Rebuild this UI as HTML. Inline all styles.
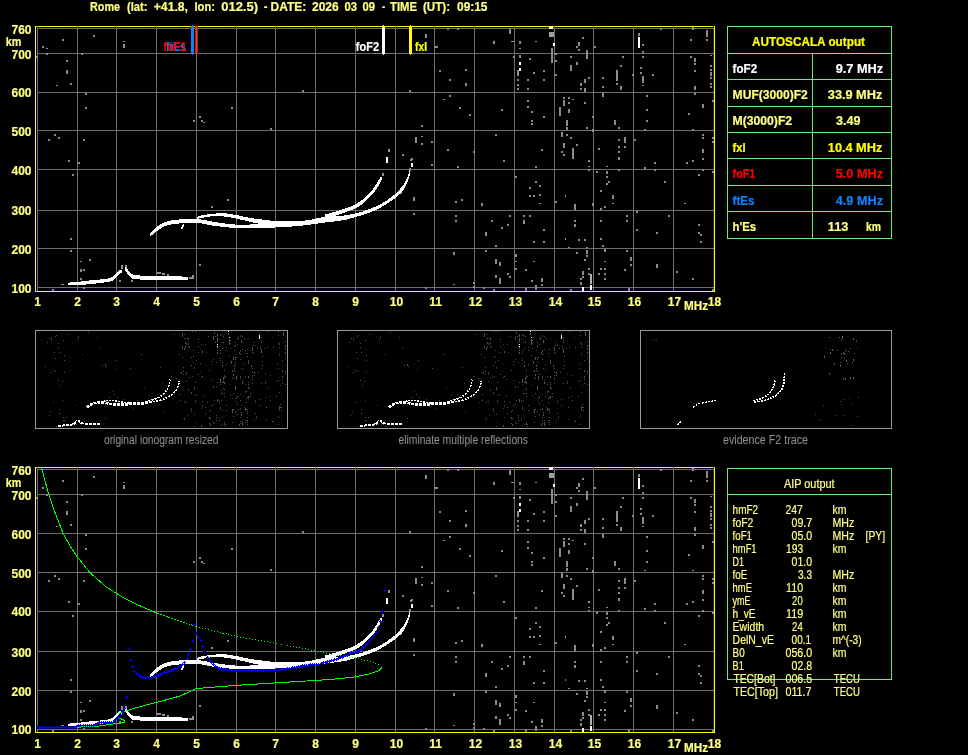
<!DOCTYPE html>
<html lang="en"><head><meta charset="utf-8"><title>AUTOSCALA ionogram - Rome</title>
<style>html,body{margin:0;padding:0;background:#000;}body{width:968px;height:755px;overflow:hidden;}svg{display:block;font-family:"Liberation Sans", sans-serif;will-change:transform;}</style>
</head><body>
<svg width="968" height="755" viewBox="0 0 968 755">
<rect width="968" height="755" fill="#000"/>
<text y="11" fill="#ffff80" stroke="#ffff80" stroke-width="0.2" font-size="12" font-weight="bold"><tspan x="90" textLength="30.00" lengthAdjust="spacingAndGlyphs">Rome</tspan> <tspan x="127" textLength="20.50" lengthAdjust="spacingAndGlyphs">(lat:</tspan> <tspan x="153.75" textLength="34.25" lengthAdjust="spacingAndGlyphs">+41.8,</tspan> <tspan x="194.5" textLength="20.50" lengthAdjust="spacingAndGlyphs">lon:</tspan> <tspan x="221.25" textLength="36.75" lengthAdjust="spacingAndGlyphs">012.5)</tspan> <tspan x="263.75" textLength="3.75" lengthAdjust="spacingAndGlyphs">-</tspan> <tspan x="270.5" textLength="35.75" lengthAdjust="spacingAndGlyphs">DATE:</tspan> <tspan x="312" textLength="26.75" lengthAdjust="spacingAndGlyphs">2026</tspan> <tspan x="344.5" textLength="12.50" lengthAdjust="spacingAndGlyphs">03</tspan> <tspan x="362.5" textLength="12.50" lengthAdjust="spacingAndGlyphs">09</tspan> <tspan x="382" textLength="3.20" lengthAdjust="spacingAndGlyphs">-</tspan> <tspan x="390" textLength="27.00" lengthAdjust="spacingAndGlyphs">TIME</tspan> <tspan x="423" textLength="27.00" lengthAdjust="spacingAndGlyphs">(UT):</tspan> <tspan x="457" textLength="30.50" lengthAdjust="spacingAndGlyphs">09:15</tspan></text>
<g shape-rendering="crispEdges">
<path d="M35 26h680v266h-680zM36 27v264h678v-264z" fill="#ffff00" fill-rule="evenodd"/>
<rect x="37" y="26" width="1" height="265" fill="#6e6e6e"/>
<rect x="77" y="26" width="1" height="265" fill="#6e6e6e"/>
<rect x="116" y="26" width="1" height="265" fill="#6e6e6e"/>
<rect x="156" y="26" width="1" height="265" fill="#6e6e6e"/>
<rect x="196" y="26" width="1" height="265" fill="#6e6e6e"/>
<rect x="236" y="26" width="1" height="265" fill="#6e6e6e"/>
<rect x="275" y="26" width="1" height="265" fill="#6e6e6e"/>
<rect x="315" y="26" width="1" height="265" fill="#6e6e6e"/>
<rect x="355" y="26" width="1" height="265" fill="#6e6e6e"/>
<rect x="395" y="26" width="1" height="265" fill="#6e6e6e"/>
<rect x="434" y="26" width="1" height="265" fill="#6e6e6e"/>
<rect x="474" y="26" width="1" height="265" fill="#6e6e6e"/>
<rect x="514" y="26" width="1" height="265" fill="#6e6e6e"/>
<rect x="554" y="26" width="1" height="265" fill="#6e6e6e"/>
<rect x="593" y="26" width="1" height="265" fill="#6e6e6e"/>
<rect x="633" y="26" width="1" height="265" fill="#6e6e6e"/>
<rect x="673" y="26" width="1" height="265" fill="#6e6e6e"/>
<rect x="713" y="26" width="1" height="265" fill="#2a2a3a"/>
<rect x="37" y="287" width="677" height="1" fill="#6e6e6e"/>
<rect x="37" y="248" width="677" height="1" fill="#6e6e6e"/>
<rect x="37" y="210" width="677" height="1" fill="#6e6e6e"/>
<rect x="37" y="169" width="677" height="1" fill="#6e6e6e"/>
<rect x="37" y="130" width="677" height="1" fill="#6e6e6e"/>
<rect x="37" y="92" width="677" height="1" fill="#6e6e6e"/>
<rect x="37" y="53" width="677" height="1" fill="#6e6e6e"/>
<rect x="37" y="28" width="677" height="1" fill="#6e6e6e"/>
<path fill="#8c8c8c" d="M62 39h2v2h-2zM93 35h2v2h-2zM42 46h2v2h-2zM46 48h2v1h-2zM123 41h2v1h-2zM123 44h2v4h-2zM46 53h2v2h-2zM81 53h2v2h-2zM36 56h2v2h-2zM66 60h2v2h-2zM66 70h2v4h-2zM70 83h2v2h-2zM56 85h2v1h-2zM85 93h2v2h-2zM85 107h2v2h-2zM231 107h2v2h-2zM199 116h2v2h-2zM193 120h2v2h-2zM201 120h2v2h-2zM203 122h2v1h-2zM54 134h2v2h-2zM58 137h2v2h-2zM48 139h2v2h-2zM83 139h2v2h-2zM68 160h2v2h-2zM78 162h2v2h-2zM72 174h2v2h-2zM227 199h2v2h-2zM211 206h2v2h-2zM70 238h2v2h-2zM70 250h2v2h-2zM89 259h2v2h-2zM80 261h2v1h-2zM80 269h2v3h-2zM83 269h2v2h-2zM80 278h2v2h-2zM199 264h2v2h-2zM119 280h2v2h-2zM131 280h2v2h-2zM52 289h2v2h-2zM83 287h2v2h-2zM61 284h3v1h-3zM302 90h2v2h-2zM409 90h2v2h-2zM270 128h2v2h-2zM421 125h2v2h-2zM425 34h2v4h-2zM434 46h2v2h-2zM415 137h2v6h-2zM421 136h2v1h-2zM421 143h2v2h-2zM431 141h2v2h-2zM388 149h2v2h-2zM402 154h2v2h-2zM411 158h2v2h-2zM431 164h2v2h-2zM413 197h2v4h-2zM413 213h2v2h-2zM425 287h2v2h-2zM447 28h2v2h-2zM457 28h2v2h-2zM509 29h2v5h-2zM436 46h2v2h-2zM493 41h2v3h-2zM511 41h3v1h-3zM519 41h2v3h-2zM519 48h2v1h-2zM535 41h2v1h-2zM551 48h2v15h-2zM555 53h2v2h-2zM555 60h2v2h-2zM555 74h2v2h-2zM582 37h2v2h-2zM578 42h2v4h-2zM576 46h2v2h-2zM578 49h2v2h-2zM594 46h2v2h-2zM586 50h2v9h-2zM570 56h2v2h-2zM576 62h2v3h-2zM570 65h2v6h-2zM622 56h2v2h-2zM620 65h2v2h-2zM616 70h2v11h-2zM616 83h2v2h-2zM620 86h2v4h-2zM632 74h2v2h-2zM588 77h2v2h-2zM584 79h2v4h-2zM580 83h2v3h-2zM580 88h2v2h-2zM584 88h2v4h-2zM602 77h2v2h-2zM602 86h2v2h-2zM602 93h2v4h-2zM513 56h2v2h-2zM519 55h2v3h-2zM529 58h2v2h-2zM517 70h2v6h-2zM517 79h2v2h-2zM517 84h2v2h-2zM517 88h2v2h-2zM527 79h2v2h-2zM527 88h2v2h-2zM533 72h2v2h-2zM543 70h2v2h-2zM543 79h2v2h-2zM439 70h2v2h-2zM465 69h2v2h-2zM449 79h2v2h-2zM465 83h2v3h-2zM449 95h2v2h-2zM443 99h2v1h-2zM459 107h2v2h-2zM469 114h2v2h-2zM501 109h2v2h-2zM495 134h2v2h-2zM527 100h2v2h-2zM527 106h2v2h-2zM531 111h2v2h-2zM543 116h2v2h-2zM531 120h2v2h-2zM531 123h2v2h-2zM563 97h2v2h-2zM568 97h2v2h-2zM572 99h2v1h-2zM563 100h2v6h-2zM568 102h2v2h-2zM559 107h2v9h-2zM568 109h2v4h-2zM584 102h2v2h-2zM566 120h2v6h-2zM566 127h2v3h-2zM586 127h2v2h-2zM592 116h2v2h-2zM592 129h2v3h-2zM614 120h2v5h-2zM618 127h2v2h-2zM561 132h2v5h-2zM566 134h2v2h-2zM570 137h2v2h-2zM563 143h2v5h-2zM576 144h2v2h-2zM572 148h2v2h-2zM618 139h2v2h-2zM624 137h2v6h-2zM618 146h2v2h-2zM624 146h2v2h-2zM634 139h2v2h-2zM598 148h2v2h-2zM447 149h2v2h-2zM541 149h2v2h-2zM473 151h2v2h-2zM561 151h2v2h-2zM563 154h2v2h-2zM572 150h2v9h-2zM618 151h2v2h-2zM618 157h2v3h-2zM503 160h2v2h-2zM588 160h2v2h-2zM588 166h2v1h-2zM588 169h2v2h-2zM606 166h2v1h-2zM618 169h2v2h-2zM457 166h2v2h-2zM535 166h2v2h-2zM596 171h2v2h-2zM606 171h2v3h-2zM606 176h2v2h-2zM608 181h2v2h-2zM606 183h2v2h-2zM515 176h2v2h-2zM535 181h2v2h-2zM539 185h2v2h-2zM529 187h2v2h-2zM529 195h2v2h-2zM533 195h2v2h-2zM539 194h2v2h-2zM539 203h2v1h-2zM600 190h2v2h-2zM612 195h2v4h-2zM612 203h2v1h-2zM565 195h1v2h-1zM555 201h2v2h-2zM574 204h2v6h-2zM592 203h2v3h-2zM604 206h2v2h-2zM600 208h2v2h-2zM455 201h2v2h-2zM461 199h2v2h-2zM481 203h2v3h-2zM455 215h2v2h-2zM455 220h2v2h-2zM491 220h2v2h-2zM509 215h2v2h-2zM507 224h2v2h-2zM501 227h2v2h-2zM485 232h2v4h-2zM495 245h2v2h-2zM523 215h2v2h-2zM529 215h2v2h-2zM523 220h2v4h-2zM543 229h2v2h-2zM533 241h2v2h-2zM543 241h2v2h-2zM574 220h2v2h-2zM574 224h2v3h-2zM565 238h1v2h-1zM578 239h2v2h-2zM584 239h2v2h-2zM568 247h2v1h-2zM600 220h2v2h-2zM626 215h2v2h-2zM626 220h2v2h-2zM600 238h2v2h-2zM602 245h2v2h-2zM604 249h2v3h-2zM626 250h2v2h-2zM453 252h2v3h-2zM485 250h2v2h-2zM495 259h2v5h-2zM499 262h2v4h-2zM515 254h2v3h-2zM515 261h2v1h-2zM515 268h2v2h-2zM533 261h2v1h-2zM525 269h2v2h-2zM507 273h2v2h-2zM509 276h2v2h-2zM495 275h2v3h-2zM499 278h2v6h-2zM531 280h2v2h-2zM541 278h2v4h-2zM541 284h2v2h-2zM473 282h2v2h-2zM473 286h2v2h-2zM453 284h2v1h-2zM483 287h2v2h-2zM493 289h2v2h-2zM525 288h2v3h-2zM535 285h2v5h-2zM576 252h2v2h-2zM586 247h2v1h-2zM586 250h2v4h-2zM586 255h2v2h-2zM584 259h2v2h-2zM588 268h2v2h-2zM582 271h2v4h-2zM588 273h2v2h-2zM580 278h2v2h-2zM580 282h2v3h-2zM582 276h2v2h-2zM570 289h2v2h-2zM604 261h2v1h-2zM600 268h2v2h-2zM604 268h2v2h-2zM598 273h2v2h-2zM604 273h2v2h-2zM604 278h2v2h-2zM624 269h2v2h-2zM630 257h2v4h-2zM630 264h2v2h-2zM628 288h2v3h-2zM638 33h2v3h-2zM642 44h2v2h-2zM642 51h2v2h-2zM642 56h2v2h-2zM640 67h2v2h-2zM640 72h2v2h-2zM642 76h2v7h-2zM642 85h2v1h-2zM652 74h2v2h-2zM660 28h2v2h-2zM692 27h2v3h-2zM690 39h2v2h-2zM706 30h2v7h-2zM706 39h2v2h-2zM690 56h2v2h-2zM694 58h2v4h-2zM694 63h2v2h-2zM694 70h2v2h-2zM694 86h2v4h-2zM694 93h2v2h-2zM710 55h2v1h-2zM710 65h2v2h-2zM710 69h2v2h-2zM710 72h2v4h-2zM710 77h2v2h-2zM710 83h2v2h-2zM710 86h2v2h-2zM712 100h2v2h-2zM702 104h2v4h-2zM688 113h2v2h-2zM646 95h2v2h-2zM646 109h2v2h-2zM646 120h2v2h-2zM644 129h2v1h-2zM692 129h2v1h-2zM702 134h2v2h-2zM702 137h2v2h-2zM712 137h2v2h-2zM712 141h2v2h-2zM702 149h2v2h-2zM634 139h2v2h-2zM616 83h2v2h-2zM620 87h2v2h-2zM618 146h2v2h-2zM624 146h2v2h-2zM654 162h2v2h-2zM644 167h2v2h-2zM654 169h2v2h-2zM664 181h2v2h-2zM686 162h2v2h-2zM692 160h2v2h-2zM702 158h2v2h-2zM702 151h2v2h-2zM702 169h2v2h-2zM698 174h2v2h-2zM712 171h2v2h-2zM684 203h2v1h-2zM636 211h2v2h-2zM636 229h2v2h-2zM668 215h2v2h-2zM656 232h2v2h-2zM698 224h2v2h-2zM698 232h2v2h-2zM700 234h2v2h-2zM700 241h2v2h-2zM656 264h2v4h-2zM676 271h2v2h-2zM692 278h2v2h-2zM712 289h2v2h-2z"/>
<path fill="#fff" d="M549 26h4v3h-4zM553 43h2v3h-2zM519 62h2v3h-2zM519 68h2v3h-2zM582 287h2v4h-2zM590 285h2v5h-2zM638 37h2v11h-2z"/>
<path fill="#a0a0a0" d="M549 32h5v5h-5z"/>
<path fill="#b0b0b0" d="M590 274h2v10h-2z"/>
<path fill="#909090" d="M382 173h2v3h-2zM388 150h2v2h-2zM121 265h2v4h-2zM125 265h2v3h-2zM189 277h5v2h-5zM192 275h2v2h-2zM157 272h4v2h-4zM162 273h3v2h-3zM167 274h2v2h-2zM409 168h2v3h-2zM410 159h2v2h-2z"/>
<polygon points="68.0,282.6 74.0,282.3 80.0,281.6 91.0,280.3 100.0,279.5 108.0,278.5 112.8,277.0 115.0,274.5 117.0,272.0 119.0,270.5 121.5,270.0 121.5,272.5 119.0,274.0 117.0,276.0 115.0,279.0 112.8,281.0 108.0,282.0 100.0,283.0 91.0,284.0 80.0,285.2 74.0,285.2 68.0,285.0" fill="#fff"/>
<polygon points="125.0,267.0 126.5,268.0 128.0,270.0 130.0,272.5 132.6,274.5 140.0,275.5 160.0,276.0 182.0,276.5 188.0,277.0 188.0,280.0 182.0,280.0 160.0,280.0 140.0,279.5 132.6,279.0 130.0,277.0 128.0,274.5 126.5,272.0 125.0,270.0" fill="#fff"/>
<polygon points="150.0,233.0 153.0,230.0 156.5,227.0 160.0,224.5 164.8,222.0 173.0,220.0 185.0,219.0 196.2,218.8 205.0,220.0 214.4,222.0 225.0,223.5 236.0,224.6 250.0,224.5 262.0,224.0 270.0,220.5 292.0,220.6 300.0,220.6 311.0,220.4 313.0,219.2 325.0,216.5 338.0,215.8 338.0,221.0 325.0,222.5 313.0,224.2 311.0,224.6 300.0,225.8 292.0,226.5 270.0,227.8 262.0,228.3 250.0,228.5 236.0,228.3 225.0,227.0 214.4,226.0 205.0,224.0 196.2,222.5 185.0,223.0 173.0,224.0 164.8,226.0 160.0,229.0 156.5,231.5 153.0,234.5 150.0,236.0" fill="#fff"/>
<polygon points="197.0,217.0 202.0,215.3 210.0,214.0 217.7,213.4 226.0,213.4 236.6,215.0 248.9,217.8 262.0,219.5 270.0,220.3 270.0,225.0 262.0,224.5 248.9,221.5 236.6,218.6 226.0,216.6 217.7,216.2 210.0,216.5 202.0,217.8 197.0,219.0" fill="#fff"/>
<polygon points="325.0,214.5 338.0,210.9 346.0,208.3 354.4,205.0 360.0,201.5 366.0,196.8 370.0,192.5 374.2,187.5 377.0,183.0 379.2,179.0 381.0,176.5 381.8,176.5 381.8,179.0 381.0,181.0 379.2,184.5 377.0,188.0 374.2,192.0 370.0,196.8 366.0,201.0 360.0,205.8 354.4,208.8 346.0,212.0 338.0,214.8 325.0,219.0" fill="#fff"/>
<polygon points="338.0,216.2 346.0,215.2 354.4,213.6 362.0,211.7 370.9,208.6 377.0,206.0 382.5,203.0 388.0,199.6 394.0,195.0 398.0,191.3 401.5,187.4 403.8,184.5 405.6,181.0 407.0,178.0 408.3,175.0 409.5,171.5 410.4,169.5 410.4,173.0 409.5,176.5 408.3,180.0 407.0,183.5 405.6,186.0 403.8,189.5 401.5,192.7 398.0,195.6 394.0,199.0 388.0,203.2 382.5,206.5 377.0,209.6 370.9,212.0 362.0,215.3 354.4,217.3 346.0,219.8 338.0,221.0" fill="#fff"/>
<rect x="386" y="157" width="2" height="6" fill="#fff"/>
<rect x="411" y="163" width="2" height="4" fill="#fff"/>
<rect x="181" y="227" width="2" height="2" fill="#fff"/>
<rect x="182" y="225" width="2" height="2" fill="#fff"/>
<rect x="183" y="224" width="1" height="2" fill="#fff"/>
</g>
<g shape-rendering="crispEdges">
<rect x="191" y="26" width="3" height="28" fill="#0a84ff"/><rect x="192" y="25" width="1" height="30" fill="#0a84ff"/>
<rect x="195" y="26" width="1" height="28" fill="#ff0000"/><rect x="197" y="26" width="1" height="28" fill="#ff0000"/><rect x="196" y="25" width="1" height="2" fill="#ff0000"/>
<rect x="382" y="26" width="3" height="28" fill="#fff"/><rect x="383" y="25" width="1" height="30" fill="#fff"/>
<rect x="409" y="26" width="3" height="28" fill="#ffff00"/><rect x="410" y="25" width="1" height="30" fill="#ffff00"/>
</g>
<text x="166" y="51" fill="#0a84ff" stroke="#0a84ff" stroke-width="0.2" font-size="12" font-weight="bold" textLength="20" lengthAdjust="spacingAndGlyphs">ftEs</text>
<text x="163.6" y="51" fill="#ff0000" stroke="#ff0000" stroke-width="0.2" font-size="12" font-weight="bold" textLength="22.8" lengthAdjust="spacingAndGlyphs">foF1</text>
<text x="355.8" y="51" fill="#fff" stroke="#fff" stroke-width="0.2" font-size="12" font-weight="bold" textLength="23.2" lengthAdjust="spacingAndGlyphs">foF2</text>
<text x="415" y="51" fill="#ffff00" stroke="#ffff00" stroke-width="0.2" font-size="12" font-weight="bold" textLength="12" lengthAdjust="spacingAndGlyphs">fxI</text>
<text x="31.5" y="34" fill="#ffff80" stroke="#ffff80" stroke-width="0.2" font-size="12" font-weight="bold" text-anchor="end">760</text>
<text x="5.8" y="46.3" fill="#ffff80" stroke="#ffff80" stroke-width="0.2" font-size="12" font-weight="bold" textLength="15.6" lengthAdjust="spacingAndGlyphs">km</text>
<text x="31.5" y="59" fill="#ffff80" stroke="#ffff80" stroke-width="0.2" font-size="12" font-weight="bold" text-anchor="end">700</text>
<text x="31.5" y="97" fill="#ffff80" stroke="#ffff80" stroke-width="0.2" font-size="12" font-weight="bold" text-anchor="end">600</text>
<text x="31.5" y="136" fill="#ffff80" stroke="#ffff80" stroke-width="0.2" font-size="12" font-weight="bold" text-anchor="end">500</text>
<text x="31.5" y="175" fill="#ffff80" stroke="#ffff80" stroke-width="0.2" font-size="12" font-weight="bold" text-anchor="end">400</text>
<text x="31.5" y="215" fill="#ffff80" stroke="#ffff80" stroke-width="0.2" font-size="12" font-weight="bold" text-anchor="end">300</text>
<text x="31.5" y="254" fill="#ffff80" stroke="#ffff80" stroke-width="0.2" font-size="12" font-weight="bold" text-anchor="end">200</text>
<text x="31.5" y="293" fill="#ffff80" stroke="#ffff80" stroke-width="0.2" font-size="12" font-weight="bold" text-anchor="end">100</text>
<text x="37.6" y="306" fill="#ffff80" stroke="#ffff80" stroke-width="0.2" font-size="12" font-weight="bold" text-anchor="middle">1</text>
<text x="77.6" y="306" fill="#ffff80" stroke="#ffff80" stroke-width="0.2" font-size="12" font-weight="bold" text-anchor="middle">2</text>
<text x="116.6" y="306" fill="#ffff80" stroke="#ffff80" stroke-width="0.2" font-size="12" font-weight="bold" text-anchor="middle">3</text>
<text x="156.6" y="306" fill="#ffff80" stroke="#ffff80" stroke-width="0.2" font-size="12" font-weight="bold" text-anchor="middle">4</text>
<text x="196.6" y="306" fill="#ffff80" stroke="#ffff80" stroke-width="0.2" font-size="12" font-weight="bold" text-anchor="middle">5</text>
<text x="236.6" y="306" fill="#ffff80" stroke="#ffff80" stroke-width="0.2" font-size="12" font-weight="bold" text-anchor="middle">6</text>
<text x="275.6" y="306" fill="#ffff80" stroke="#ffff80" stroke-width="0.2" font-size="12" font-weight="bold" text-anchor="middle">7</text>
<text x="315.6" y="306" fill="#ffff80" stroke="#ffff80" stroke-width="0.2" font-size="12" font-weight="bold" text-anchor="middle">8</text>
<text x="355.6" y="306" fill="#ffff80" stroke="#ffff80" stroke-width="0.2" font-size="12" font-weight="bold" text-anchor="middle">9</text>
<text x="396.5" y="306" fill="#ffff80" stroke="#ffff80" stroke-width="0.2" font-size="12" font-weight="bold" text-anchor="middle">10</text>
<text x="435.5" y="306" fill="#ffff80" stroke="#ffff80" stroke-width="0.2" font-size="12" font-weight="bold" text-anchor="middle">11</text>
<text x="475.5" y="306" fill="#ffff80" stroke="#ffff80" stroke-width="0.2" font-size="12" font-weight="bold" text-anchor="middle">12</text>
<text x="515.5" y="306" fill="#ffff80" stroke="#ffff80" stroke-width="0.2" font-size="12" font-weight="bold" text-anchor="middle">13</text>
<text x="555.5" y="306" fill="#ffff80" stroke="#ffff80" stroke-width="0.2" font-size="12" font-weight="bold" text-anchor="middle">14</text>
<text x="594.5" y="306" fill="#ffff80" stroke="#ffff80" stroke-width="0.2" font-size="12" font-weight="bold" text-anchor="middle">15</text>
<text x="634.5" y="306" fill="#ffff80" stroke="#ffff80" stroke-width="0.2" font-size="12" font-weight="bold" text-anchor="middle">16</text>
<text x="674.5" y="306" fill="#ffff80" stroke="#ffff80" stroke-width="0.2" font-size="12" font-weight="bold" text-anchor="middle">17</text>
<text x="714.5" y="306" fill="#ffff80" stroke="#ffff80" stroke-width="0.2" font-size="12" font-weight="bold" text-anchor="middle">18</text>
<text x="684" y="310" fill="#ffff80" stroke="#ffff80" stroke-width="0.2" font-size="12" font-weight="bold" textLength="24" lengthAdjust="spacingAndGlyphs">MHz</text>
<g shape-rendering="crispEdges">
<rect x="727" y="26" width="165" height="1" fill="#66ee77"/>
<rect x="727" y="53" width="165" height="1" fill="#66ee77"/>
<rect x="727" y="79" width="165" height="1" fill="#66ee77"/>
<rect x="727" y="106" width="165" height="1" fill="#66ee77"/>
<rect x="727" y="132" width="165" height="1" fill="#66ee77"/>
<rect x="727" y="158" width="165" height="1" fill="#66ee77"/>
<rect x="727" y="185" width="165" height="1" fill="#66ee77"/>
<rect x="727" y="211" width="165" height="1" fill="#66ee77"/>
<rect x="727" y="238" width="165" height="1" fill="#66ee77"/>
<rect x="727" y="26" width="1" height="213" fill="#66ee77"/>
<rect x="891" y="26" width="1" height="213" fill="#66ee77"/>
<rect x="812" y="53" width="1" height="185" fill="#66ee77"/>
</g>
<text x="752" y="46" fill="#ffff00" stroke="#ffff00" stroke-width="0.2" font-size="12" font-weight="bold" textLength="113" lengthAdjust="spacingAndGlyphs">AUTOSCALA output</text>
<text x="732.6" y="73" fill="#fff" stroke="#fff" stroke-width="0.2" font-size="12" font-weight="bold" textLength="24.5" lengthAdjust="spacingAndGlyphs">foF2</text>
<text x="835.7" y="73" fill="#fff" stroke="#fff" stroke-width="0.2" font-size="12" font-weight="bold" textLength="47.5" lengthAdjust="spacingAndGlyphs">9.7 MHz</text>
<text x="732.6" y="99" fill="#ffff80" stroke="#ffff80" stroke-width="0.2" font-size="12" font-weight="bold" textLength="75.2" lengthAdjust="spacingAndGlyphs">MUF(3000)F2</text>
<text x="827.8" y="99" fill="#ffff80" stroke="#ffff80" stroke-width="0.2" font-size="12" font-weight="bold" textLength="54.5" lengthAdjust="spacingAndGlyphs">33.9 MHz</text>
<text x="732.6" y="125" fill="#ffff80" stroke="#ffff80" stroke-width="0.2" font-size="12" font-weight="bold" textLength="59.5" lengthAdjust="spacingAndGlyphs">M(3000)F2</text>
<text x="836" y="125" fill="#ffff80" stroke="#ffff80" stroke-width="0.2" font-size="12" font-weight="bold" textLength="24.5" lengthAdjust="spacingAndGlyphs">3.49</text>
<text x="732.6" y="152" fill="#ffff00" stroke="#ffff00" stroke-width="0.2" font-size="12" font-weight="bold" textLength="13" lengthAdjust="spacingAndGlyphs">fxI</text>
<text x="827.8" y="152" fill="#ffff00" stroke="#ffff00" stroke-width="0.2" font-size="12" font-weight="bold" textLength="54.5" lengthAdjust="spacingAndGlyphs">10.4 MHz</text>
<text x="732.6" y="178" fill="#ff0000" stroke="#ff0000" stroke-width="0.2" font-size="12" font-weight="bold" textLength="22.7" lengthAdjust="spacingAndGlyphs">foF1</text>
<text x="835.7" y="178" fill="#ff0000" stroke="#ff0000" stroke-width="0.2" font-size="12" font-weight="bold" textLength="47.5" lengthAdjust="spacingAndGlyphs">5.0 MHz</text>
<text x="732.6" y="204.5" fill="#0a84ff" stroke="#0a84ff" stroke-width="0.2" font-size="12" font-weight="bold" textLength="21.8" lengthAdjust="spacingAndGlyphs">ftEs</text>
<text x="835.7" y="204.5" fill="#0a84ff" stroke="#0a84ff" stroke-width="0.2" font-size="12" font-weight="bold" textLength="47.5" lengthAdjust="spacingAndGlyphs">4.9 MHz</text>
<text x="732.6" y="231" fill="#ffff80" stroke="#ffff80" stroke-width="0.2" font-size="12" font-weight="bold" textLength="23.6" lengthAdjust="spacingAndGlyphs">h'Es</text>
<text x="827.8" y="231" fill="#ffff80" stroke="#ffff80" stroke-width="0.2" font-size="12" font-weight="bold" textLength="20.5" lengthAdjust="spacingAndGlyphs">113</text>
<text x="866" y="231" fill="#ffff80" stroke="#ffff80" stroke-width="0.2" font-size="12" font-weight="bold" textLength="15" lengthAdjust="spacingAndGlyphs">km</text>
<g shape-rendering="crispEdges">
<rect x="35" y="330" width="252" height="1" fill="#9a9a9a"/>
<rect x="35" y="428" width="253" height="1" fill="#9a9a9a"/>
<rect x="35" y="330" width="1" height="99" fill="#9a9a9a"/>
<rect x="287" y="330" width="1" height="99" fill="#9a9a9a"/>
<rect x="337" y="330" width="252" height="1" fill="#9a9a9a"/>
<rect x="337" y="428" width="253" height="1" fill="#9a9a9a"/>
<rect x="337" y="330" width="1" height="99" fill="#9a9a9a"/>
<rect x="589" y="330" width="1" height="99" fill="#9a9a9a"/>
<rect x="640" y="330" width="251" height="1" fill="#9a9a9a"/>
<rect x="640" y="428" width="252" height="1" fill="#9a9a9a"/>
<rect x="640" y="330" width="1" height="99" fill="#9a9a9a"/>
<rect x="891" y="330" width="1" height="99" fill="#9a9a9a"/>
<path fill="#505050" d="M56 335h1v1h-1zM67 334h1v1h-1zM49 338h1v1h-1zM51 338h1v1h-1zM78 336h1v1h-1zM78 338h1v1h-1zM51 340h1v1h-1zM63 340h1v1h-1zM47 342h1v1h-1zM58 343h1v1h-1zM58 347h1v1h-1zM59 352h1v1h-1zM54 352h1v1h-1zM64 355h1v1h-1zM64 360h1v1h-1zM116 360h1v1h-1zM105 364h1v1h-1zM102 365h1v1h-1zM105 365h1v1h-1zM106 366h1v1h-1zM53 370h1v1h-1zM55 371h1v1h-1zM51 372h1v1h-1zM64 372h1v1h-1zM58 380h1v1h-1zM62 381h1v1h-1zM60 385h1v1h-1zM114 394h1v1h-1zM109 397h1v1h-1zM59 409h1v1h-1zM59 413h1v1h-1zM66 417h1v1h-1zM63 417h1v1h-1zM63 420h1v1h-1zM64 420h1v1h-1zM63 424h1v1h-1zM105 418h1v1h-1zM76 424h1v1h-1zM81 424h1v1h-1zM56 426h1v1h-1zM141 354h1v1h-1zM179 354h1v1h-1zM130 368h1v1h-1zM183 367h1v1h-1zM184 334h1v1h-1zM187 338h1v1h-1zM181 372h1v2h-1zM183 371h1v1h-1zM183 374h1v1h-1zM186 373h1v1h-1zM171 376h1v1h-1zM176 378h1v1h-1zM179 379h1v1h-1zM186 381h1v1h-1zM180 394h1v1h-1zM180 400h1v1h-1zM192 331h1v1h-1zM195 331h1v1h-1zM214 332h1v2h-1zM188 338h1v1h-1zM208 336h1v1h-1zM215 336h1v1h-1zM217 336h1v1h-1zM217 338h1v1h-1zM223 336h1v1h-1zM228 333h1v2h-1zM229 339h1v6h-1zM230 340h1v1h-1zM230 343h1v1h-1zM230 348h1v1h-1zM240 335h1v1h-1zM238 337h1v1h-1zM237 338h1v1h-1zM238 339h1v1h-1zM244 338h1v1h-1zM241 340h1v3h-1zM235 342h1v1h-1zM237 344h1v1h-1zM235 345h1v2h-1zM254 342h1v1h-1zM253 345h1v1h-1zM252 347h1v4h-1zM252 352h1v1h-1zM253 353h1v1h-1zM257 348h1v1h-1zM242 349h1v1h-1zM240 350h1v1h-1zM239 352h1v1h-1zM239 353h1v1h-1zM240 354h1v1h-1zM247 349h1v1h-1zM247 353h1v1h-1zM247 356h1v1h-1zM215 342h1v1h-1zM217 341h1v1h-1zM221 342h1v1h-1zM217 347h1v2h-1zM217 350h1v1h-1zM217 352h1v1h-1zM217 353h1v1h-1zM220 350h1v1h-1zM220 353h1v1h-1zM222 348h1v1h-1zM226 347h1v1h-1zM226 350h1v1h-1zM189 347h1v1h-1zM198 346h1v1h-1zM193 350h1v1h-1zM198 352h1v1h-1zM193 356h1v1h-1zM191 357h1v1h-1zM196 360h1v1h-1zM200 363h1v1h-1zM211 361h1v1h-1zM209 370h1v1h-1zM220 358h1v1h-1zM220 360h1v1h-1zM222 362h1v1h-1zM226 364h1v1h-1zM222 365h1v1h-1zM222 366h1v1h-1zM233 357h1v1h-1zM235 357h1v1h-1zM236 357h1v1h-1zM233 358h1v2h-1zM235 359h1v1h-1zM231 361h1v3h-1zM235 362h1v1h-1zM240 359h1v1h-1zM234 365h1v2h-1zM234 368h1v1h-1zM241 368h1v1h-1zM243 364h1v1h-1zM243 369h1v1h-1zM251 365h1v2h-1zM252 368h1v1h-1zM232 370h1v2h-1zM234 370h1v1h-1zM235 371h1v1h-1zM233 374h1v2h-1zM237 374h1v1h-1zM236 376h1v1h-1zM252 372h1v1h-1zM254 372h1v2h-1zM252 375h1v1h-1zM254 375h1v1h-1zM258 372h1v1h-1zM245 376h1v1h-1zM192 376h1v1h-1zM225 376h1v1h-1zM201 377h1v1h-1zM232 377h1v1h-1zM233 378h1v1h-1zM236 377h1v3h-1zM252 377h1v1h-1zM252 379h1v1h-1zM212 380h1v1h-1zM242 380h1v1h-1zM242 382h1v1h-1zM242 383h1v1h-1zM248 382h1v1h-1zM252 383h1v1h-1zM195 382h1v1h-1zM223 382h1v1h-1zM245 384h1v1h-1zM248 384h1v1h-1zM248 386h1v1h-1zM249 388h1v1h-1zM248 388h1v1h-1zM216 386h1v1h-1zM223 388h1v1h-1zM224 389h1v1h-1zM221 390h1v1h-1zM221 393h1v1h-1zM222 393h1v1h-1zM224 393h1v1h-1zM224 396h1v1h-1zM246 391h1v1h-1zM250 393h1v1h-1zM250 396h1v1h-1zM233 393h1v1h-1zM230 395h1v1h-1zM237 396h1v2h-1zM243 396h1v1h-1zM247 397h1v1h-1zM246 398h1v1h-1zM195 395h1v1h-1zM197 394h1v1h-1zM204 396h1v1h-1zM195 400h1v1h-1zM195 402h1v1h-1zM207 402h1v1h-1zM214 400h1v1h-1zM213 404h1v1h-1zM211 405h1v1h-1zM205 407h1v1h-1zM209 411h1v1h-1zM219 400h1v1h-1zM221 400h1v1h-1zM219 402h1v1h-1zM226 405h1v1h-1zM222 410h1v1h-1zM226 410h1v1h-1zM237 402h1v1h-1zM237 404h1v1h-1zM233 409h1v1h-1zM238 409h1v1h-1zM240 409h1v1h-1zM235 412h1v1h-1zM246 402h1v1h-1zM255 400h1v1h-1zM255 402h1v1h-1zM246 409h1v1h-1zM247 411h1v1h-1zM247 413h1v1h-1zM255 413h1v1h-1zM194 414h1v1h-1zM205 413h1v1h-1zM209 417h1v2h-1zM210 418h1v1h-1zM216 415h1v1h-1zM216 417h1v1h-1zM216 420h1v1h-1zM222 417h1v1h-1zM219 420h1v1h-1zM213 422h1v1h-1zM214 423h1v1h-1zM209 423h1v1h-1zM210 424h1v2h-1zM222 424h1v1h-1zM225 424h1v1h-1zM225 426h1v1h-1zM201 425h1v1h-1zM201 426h1v1h-1zM194 426h1v1h-1zM237 414h1v1h-1zM241 412h1v1h-1zM241 414h1v1h-1zM241 415h1v1h-1zM240 417h1v1h-1zM242 420h1v1h-1zM240 421h1v1h-1zM242 422h1v1h-1zM242 422h1v4h-1zM239 424h1v1h-1zM239 425h1v1h-1zM240 423h1v1h-1zM247 417h1v1h-1zM246 420h1v1h-1zM247 420h1v1h-1zM245 422h1v1h-1zM247 422h1v1h-1zM247 424h1v1h-1zM254 420h1v1h-1zM256 416h1v1h-1zM256 418h1v1h-1zM259 333h1v1h-1zM261 337h1v1h-1zM261 340h1v1h-1zM261 342h1v1h-1zM260 346h1v1h-1zM260 348h1v1h-1zM261 349h1v3h-1zM261 352h1v1h-1zM264 348h1v1h-1zM267 331h1v1h-1zM278 331h1v1h-1zM278 335h1v1h-1zM283 332h1v3h-1zM283 335h1v1h-1zM278 342h1v1h-1zM279 343h1v1h-1zM279 344h1v1h-1zM279 347h1v1h-1zM279 353h1v1h-1zM279 355h1v1h-1zM285 341h1v1h-1zM285 345h1v1h-1zM285 346h1v1h-1zM285 348h1v1h-1zM285 349h1v1h-1zM285 352h1v1h-1zM285 353h1v1h-1zM285 358h1v1h-1zM282 360h1v1h-1zM277 363h1v1h-1zM262 356h1v1h-1zM262 361h1v1h-1zM262 365h1v1h-1zM261 368h1v1h-1zM278 368h1v1h-1zM282 370h1v1h-1zM282 371h1v1h-1zM285 371h1v1h-1zM285 373h1v1h-1zM282 376h1v1h-1zM258 372h1v1h-1zM252 352h1v1h-1zM253 353h1v1h-1zM252 375h1v1h-1zM254 375h1v1h-1zM265 381h1v1h-1zM261 383h1v1h-1zM265 383h1v1h-1zM268 388h1v1h-1zM276 381h1v1h-1zM278 380h1v1h-1zM282 379h1v1h-1zM282 377h1v1h-1zM282 383h1v1h-1zM280 385h1v1h-1zM285 384h1v1h-1zM276 396h1v1h-1zM259 399h1v1h-1zM259 405h1v1h-1zM270 400h1v1h-1zM266 407h1v1h-1zM280 404h1v1h-1zM280 407h1v1h-1zM281 407h1v1h-1zM281 410h1v1h-1zM266 419h1v1h-1zM273 421h1v1h-1zM278 424h1v1h-1z"/>
<path fill="#ffffff" d="M228 331h1v1h-1zM229 337h1v1h-1zM217 344h1v1h-1zM217 346h1v1h-1zM259 335h1v4h-1z"/>
<path fill="#484848" d="M213 336h1v4h-1zM213 386h1v2h-1zM194 387h1v3h-1zM248 360h1v4h-1zM186 343h1v2h-1zM182 346h1v3h-1zM182 333h1v4h-1zM182 357h1v1h-1zM185 342h1v2h-1zM223 377h1v3h-1zM191 392h1v2h-1zM279 406h1v4h-1zM240 400h1v1h-1zM240 394h1v1h-1zM220 425h1v1h-1zM53 402h1v1h-1zM97 337h1v1h-1zM149 395h1v1h-1zM100 347h1v1h-1zM45 366h1v1h-1zM88 332h1v1h-1zM77 340h1v1h-1zM115 369h1v1h-1zM124 399h1v1h-1zM137 400h1v1h-1zM50 411h1v1h-1zM55 336h1v1h-1zM160 367h1v1h-1z"/>
<path fill="#3c3c3c" d="M213 359h1v1h-1zM194 367h1v2h-1zM248 398h1v1h-1zM186 401h1v1h-1zM186 372h1v3h-1zM235 387h1v2h-1zM235 398h1v1h-1zM184 418h1v2h-1zM232 422h1v1h-1zM224 422h1v3h-1zM224 369h1v2h-1zM224 377h1v2h-1zM185 347h1v1h-1zM188 342h1v1h-1zM188 389h1v2h-1zM188 377h1v1h-1zM245 422h1v1h-1zM245 391h1v2h-1zM279 417h1v1h-1zM279 406h1v1h-1zM240 376h1v3h-1zM220 384h1v1h-1zM220 407h1v3h-1zM177 402h1v1h-1zM240 351h1v1h-1zM222 382h1v1h-1zM272 421h1v1h-1zM279 392h1v1h-1zM187 415h1v1h-1zM195 422h1v1h-1zM267 347h1v1h-1zM285 370h1v1h-1zM212 364h1v1h-1zM221 334h1v1h-1zM283 342h1v1h-1zM201 344h1v1h-1zM269 396h1v1h-1zM241 353h1v1h-1zM270 375h1v1h-1zM285 371h1v1h-1zM200 349h1v1h-1zM201 408h1v1h-1zM234 350h1v1h-1zM265 373h1v1h-1zM255 345h1v1h-1z"/>
<path fill="#333" d="M248 338h1v1h-1zM248 386h1v2h-1zM186 403h1v1h-1zM235 364h1v1h-1zM235 411h1v1h-1zM235 401h1v1h-1zM217 348h1v1h-1zM184 401h1v2h-1zM232 398h1v1h-1zM224 375h1v4h-1zM185 338h1v1h-1zM188 339h1v1h-1zM188 343h1v2h-1zM191 408h1v4h-1zM245 353h1v1h-1zM245 350h1v1h-1zM279 410h1v1h-1zM279 377h1v1h-1zM240 335h1v2h-1zM240 408h1v1h-1zM220 381h1v1h-1z"/>
<path fill="#585858" d="M248 396h1v2h-1zM248 376h1v2h-1zM235 386h1v4h-1zM217 399h1v3h-1zM217 334h1v2h-1zM217 338h1v4h-1zM184 348h1v2h-1zM232 409h1v4h-1zM224 382h1v2h-1zM188 346h1v1h-1zM223 342h1v1h-1zM223 381h1v1h-1zM266 397h1v1h-1zM266 397h1v1h-1zM191 365h1v1h-1zM202 351h1v2h-1zM202 401h1v1h-1zM202 376h1v1h-1zM245 408h1v3h-1zM220 335h1v1h-1zM220 379h1v4h-1z"/>
<path fill="#303030" d="M200 371h1v1h-1zM172 373h1v1h-1zM241 405h1v1h-1zM230 384h1v1h-1zM272 337h1v1h-1zM222 335h1v1h-1zM277 416h1v1h-1zM267 345h1v1h-1zM205 344h1v1h-1zM230 360h1v1h-1zM183 418h1v1h-1zM202 417h1v1h-1zM236 398h1v1h-1zM202 407h1v1h-1zM219 339h1v1h-1zM244 407h1v1h-1zM198 342h1v1h-1zM243 382h1v1h-1zM204 379h1v1h-1zM206 352h1v1h-1z"/>
<path fill="#4c4c4c" d="M247 409h1v1h-1zM219 418h1v1h-1zM185 346h1v1h-1zM190 377h1v1h-1zM184 338h1v1h-1zM202 405h1v1h-1zM221 390h1v1h-1zM229 355h1v1h-1zM216 362h1v1h-1zM198 339h1v1h-1zM273 347h1v1h-1zM193 362h1v1h-1zM217 382h1v1h-1zM242 336h1v1h-1zM174 334h1v1h-1zM198 374h1v1h-1zM233 416h1v1h-1zM210 410h1v1h-1z"/>
<path fill="#383838" d="M163 411h1v1h-1zM117 397h1v1h-1zM162 383h1v1h-1zM49 415h1v1h-1zM55 358h1v1h-1zM75 405h1v1h-1zM82 354h1v1h-1zM63 400h1v1h-1zM133 408h1v1h-1zM154 403h1v1h-1zM144 387h1v1h-1zM112 391h1v1h-1z"/>
<path fill="#505050" d="M358 335h1v1h-1zM369 334h1v1h-1zM351 338h1v1h-1zM353 338h1v1h-1zM380 336h1v1h-1zM380 338h1v1h-1zM353 340h1v1h-1zM365 340h1v1h-1zM349 342h1v1h-1zM360 343h1v1h-1zM360 347h1v1h-1zM361 352h1v1h-1zM356 352h1v1h-1zM366 355h1v1h-1zM366 360h1v1h-1zM418 360h1v1h-1zM407 364h1v1h-1zM404 365h1v1h-1zM407 365h1v1h-1zM408 366h1v1h-1zM355 370h1v1h-1zM357 371h1v1h-1zM353 372h1v1h-1zM366 372h1v1h-1zM360 380h1v1h-1zM364 381h1v1h-1zM362 385h1v1h-1zM416 394h1v1h-1zM411 397h1v1h-1zM361 409h1v1h-1zM361 413h1v1h-1zM368 417h1v1h-1zM365 417h1v1h-1zM365 420h1v1h-1zM366 420h1v1h-1zM365 424h1v1h-1zM407 418h1v1h-1zM378 424h1v1h-1zM383 424h1v1h-1zM358 426h1v1h-1zM443 354h1v1h-1zM481 354h1v1h-1zM432 368h1v1h-1zM485 367h1v1h-1zM486 334h1v1h-1zM489 338h1v1h-1zM483 372h1v2h-1zM485 371h1v1h-1zM485 374h1v1h-1zM488 373h1v1h-1zM473 376h1v1h-1zM478 378h1v1h-1zM481 379h1v1h-1zM488 381h1v1h-1zM482 394h1v1h-1zM482 400h1v1h-1zM494 331h1v1h-1zM497 331h1v1h-1zM516 332h1v2h-1zM490 338h1v1h-1zM510 336h1v1h-1zM517 336h1v1h-1zM519 336h1v1h-1zM519 338h1v1h-1zM525 336h1v1h-1zM530 333h1v2h-1zM531 339h1v6h-1zM532 340h1v1h-1zM532 343h1v1h-1zM532 348h1v1h-1zM542 335h1v1h-1zM540 337h1v1h-1zM539 338h1v1h-1zM540 339h1v1h-1zM546 338h1v1h-1zM543 340h1v3h-1zM537 342h1v1h-1zM539 344h1v1h-1zM537 345h1v2h-1zM556 342h1v1h-1zM555 345h1v1h-1zM554 347h1v4h-1zM554 352h1v1h-1zM555 353h1v1h-1zM559 348h1v1h-1zM544 349h1v1h-1zM542 350h1v1h-1zM541 352h1v1h-1zM541 353h1v1h-1zM542 354h1v1h-1zM549 349h1v1h-1zM549 353h1v1h-1zM549 356h1v1h-1zM517 342h1v1h-1zM519 341h1v1h-1zM523 342h1v1h-1zM519 347h1v2h-1zM519 350h1v1h-1zM519 352h1v1h-1zM519 353h1v1h-1zM522 350h1v1h-1zM522 353h1v1h-1zM524 348h1v1h-1zM528 347h1v1h-1zM528 350h1v1h-1zM491 347h1v1h-1zM500 346h1v1h-1zM495 350h1v1h-1zM500 352h1v1h-1zM495 356h1v1h-1zM493 357h1v1h-1zM498 360h1v1h-1zM502 363h1v1h-1zM513 361h1v1h-1zM511 370h1v1h-1zM522 358h1v1h-1zM522 360h1v1h-1zM524 362h1v1h-1zM528 364h1v1h-1zM524 365h1v1h-1zM524 366h1v1h-1zM535 357h1v1h-1zM537 357h1v1h-1zM538 357h1v1h-1zM535 358h1v2h-1zM537 359h1v1h-1zM533 361h1v3h-1zM537 362h1v1h-1zM542 359h1v1h-1zM536 365h1v2h-1zM536 368h1v1h-1zM543 368h1v1h-1zM545 364h1v1h-1zM545 369h1v1h-1zM553 365h1v2h-1zM554 368h1v1h-1zM534 370h1v2h-1zM536 370h1v1h-1zM537 371h1v1h-1zM535 374h1v2h-1zM539 374h1v1h-1zM538 376h1v1h-1zM554 372h1v1h-1zM556 372h1v2h-1zM554 375h1v1h-1zM556 375h1v1h-1zM560 372h1v1h-1zM547 376h1v1h-1zM494 376h1v1h-1zM527 376h1v1h-1zM503 377h1v1h-1zM534 377h1v1h-1zM535 378h1v1h-1zM538 377h1v3h-1zM554 377h1v1h-1zM554 379h1v1h-1zM514 380h1v1h-1zM544 380h1v1h-1zM544 382h1v1h-1zM544 383h1v1h-1zM550 382h1v1h-1zM554 383h1v1h-1zM497 382h1v1h-1zM525 382h1v1h-1zM547 384h1v1h-1zM550 384h1v1h-1zM550 386h1v1h-1zM551 388h1v1h-1zM550 388h1v1h-1zM518 386h1v1h-1zM525 388h1v1h-1zM526 389h1v1h-1zM523 390h1v1h-1zM523 393h1v1h-1zM524 393h1v1h-1zM526 393h1v1h-1zM526 396h1v1h-1zM548 391h1v1h-1zM552 393h1v1h-1zM552 396h1v1h-1zM535 393h1v1h-1zM532 395h1v1h-1zM539 396h1v2h-1zM545 396h1v1h-1zM549 397h1v1h-1zM548 398h1v1h-1zM497 395h1v1h-1zM499 394h1v1h-1zM506 396h1v1h-1zM497 400h1v1h-1zM497 402h1v1h-1zM509 402h1v1h-1zM516 400h1v1h-1zM515 404h1v1h-1zM513 405h1v1h-1zM507 407h1v1h-1zM511 411h1v1h-1zM521 400h1v1h-1zM523 400h1v1h-1zM521 402h1v1h-1zM528 405h1v1h-1zM524 410h1v1h-1zM528 410h1v1h-1zM539 402h1v1h-1zM539 404h1v1h-1zM535 409h1v1h-1zM540 409h1v1h-1zM542 409h1v1h-1zM537 412h1v1h-1zM548 402h1v1h-1zM557 400h1v1h-1zM557 402h1v1h-1zM548 409h1v1h-1zM549 411h1v1h-1zM549 413h1v1h-1zM557 413h1v1h-1zM496 414h1v1h-1zM507 413h1v1h-1zM511 417h1v2h-1zM512 418h1v1h-1zM518 415h1v1h-1zM518 417h1v1h-1zM518 420h1v1h-1zM524 417h1v1h-1zM521 420h1v1h-1zM515 422h1v1h-1zM516 423h1v1h-1zM511 423h1v1h-1zM512 424h1v2h-1zM524 424h1v1h-1zM527 424h1v1h-1zM527 426h1v1h-1zM503 425h1v1h-1zM503 426h1v1h-1zM496 426h1v1h-1zM539 414h1v1h-1zM543 412h1v1h-1zM543 414h1v1h-1zM543 415h1v1h-1zM542 417h1v1h-1zM544 420h1v1h-1zM542 421h1v1h-1zM544 422h1v1h-1zM544 422h1v4h-1zM541 424h1v1h-1zM541 425h1v1h-1zM542 423h1v1h-1zM549 417h1v1h-1zM548 420h1v1h-1zM549 420h1v1h-1zM547 422h1v1h-1zM549 422h1v1h-1zM549 424h1v1h-1zM556 420h1v1h-1zM558 416h1v1h-1zM558 418h1v1h-1zM561 333h1v1h-1zM563 337h1v1h-1zM563 340h1v1h-1zM563 342h1v1h-1zM562 346h1v1h-1zM562 348h1v1h-1zM563 349h1v3h-1zM563 352h1v1h-1zM566 348h1v1h-1zM569 331h1v1h-1zM580 331h1v1h-1zM580 335h1v1h-1zM585 332h1v3h-1zM585 335h1v1h-1zM580 342h1v1h-1zM581 343h1v1h-1zM581 344h1v1h-1zM581 347h1v1h-1zM581 353h1v1h-1zM581 355h1v1h-1zM587 341h1v1h-1zM587 345h1v1h-1zM587 346h1v1h-1zM587 348h1v1h-1zM587 349h1v1h-1zM587 352h1v1h-1zM587 353h1v1h-1zM587 358h1v1h-1zM584 360h1v1h-1zM579 363h1v1h-1zM564 356h1v1h-1zM564 361h1v1h-1zM564 365h1v1h-1zM563 368h1v1h-1zM580 368h1v1h-1zM584 370h1v1h-1zM584 371h1v1h-1zM587 371h1v1h-1zM587 373h1v1h-1zM584 376h1v1h-1zM560 372h1v1h-1zM554 352h1v1h-1zM555 353h1v1h-1zM554 375h1v1h-1zM556 375h1v1h-1zM567 381h1v1h-1zM563 383h1v1h-1zM567 383h1v1h-1zM570 388h1v1h-1zM578 381h1v1h-1zM580 380h1v1h-1zM584 379h1v1h-1zM584 377h1v1h-1zM584 383h1v1h-1zM582 385h1v1h-1zM587 384h1v1h-1zM578 396h1v1h-1zM561 399h1v1h-1zM561 405h1v1h-1zM572 400h1v1h-1zM568 407h1v1h-1zM582 404h1v1h-1zM582 407h1v1h-1zM583 407h1v1h-1zM583 410h1v1h-1zM568 419h1v1h-1zM575 421h1v1h-1zM580 424h1v1h-1z"/>
<path fill="#ffffff" d="M530 331h1v1h-1zM531 337h1v1h-1zM519 344h1v1h-1zM519 346h1v1h-1zM561 335h1v4h-1z"/>
<path fill="#484848" d="M515 336h1v4h-1zM515 386h1v2h-1zM496 387h1v3h-1zM550 360h1v4h-1zM488 343h1v2h-1zM484 346h1v3h-1zM484 333h1v4h-1zM484 357h1v1h-1zM487 342h1v2h-1zM525 377h1v3h-1zM493 392h1v2h-1zM581 406h1v4h-1zM542 400h1v1h-1zM542 394h1v1h-1zM522 425h1v1h-1zM355 402h1v1h-1zM399 337h1v1h-1zM451 395h1v1h-1zM402 347h1v1h-1zM347 366h1v1h-1zM390 332h1v1h-1zM379 340h1v1h-1zM417 369h1v1h-1zM426 399h1v1h-1zM439 400h1v1h-1zM352 411h1v1h-1zM357 336h1v1h-1zM462 367h1v1h-1z"/>
<path fill="#3c3c3c" d="M515 359h1v1h-1zM496 367h1v2h-1zM550 398h1v1h-1zM488 401h1v1h-1zM488 372h1v3h-1zM537 387h1v2h-1zM537 398h1v1h-1zM486 418h1v2h-1zM534 422h1v1h-1zM526 422h1v3h-1zM526 369h1v2h-1zM526 377h1v2h-1zM487 347h1v1h-1zM490 342h1v1h-1zM490 389h1v2h-1zM490 377h1v1h-1zM547 422h1v1h-1zM547 391h1v2h-1zM581 417h1v1h-1zM581 406h1v1h-1zM542 376h1v3h-1zM522 384h1v1h-1zM522 407h1v3h-1zM479 402h1v1h-1zM542 351h1v1h-1zM524 382h1v1h-1zM574 421h1v1h-1zM581 392h1v1h-1zM489 415h1v1h-1zM497 422h1v1h-1zM569 347h1v1h-1zM587 370h1v1h-1zM514 364h1v1h-1zM523 334h1v1h-1zM585 342h1v1h-1zM503 344h1v1h-1zM571 396h1v1h-1zM543 353h1v1h-1zM572 375h1v1h-1zM587 371h1v1h-1zM502 349h1v1h-1zM503 408h1v1h-1zM536 350h1v1h-1zM567 373h1v1h-1zM557 345h1v1h-1z"/>
<path fill="#333" d="M550 338h1v1h-1zM550 386h1v2h-1zM488 403h1v1h-1zM537 364h1v1h-1zM537 411h1v1h-1zM537 401h1v1h-1zM519 348h1v1h-1zM486 401h1v2h-1zM534 398h1v1h-1zM526 375h1v4h-1zM487 338h1v1h-1zM490 339h1v1h-1zM490 343h1v2h-1zM493 408h1v4h-1zM547 353h1v1h-1zM547 350h1v1h-1zM581 410h1v1h-1zM581 377h1v1h-1zM542 335h1v2h-1zM542 408h1v1h-1zM522 381h1v1h-1z"/>
<path fill="#585858" d="M550 396h1v2h-1zM550 376h1v2h-1zM537 386h1v4h-1zM519 399h1v3h-1zM519 334h1v2h-1zM519 338h1v4h-1zM486 348h1v2h-1zM534 409h1v4h-1zM526 382h1v2h-1zM490 346h1v1h-1zM525 342h1v1h-1zM525 381h1v1h-1zM568 397h1v1h-1zM568 397h1v1h-1zM493 365h1v1h-1zM504 351h1v2h-1zM504 401h1v1h-1zM504 376h1v1h-1zM547 408h1v3h-1zM522 335h1v1h-1zM522 379h1v4h-1z"/>
<path fill="#303030" d="M502 371h1v1h-1zM474 373h1v1h-1zM543 405h1v1h-1zM532 384h1v1h-1zM574 337h1v1h-1zM524 335h1v1h-1zM579 416h1v1h-1zM569 345h1v1h-1zM507 344h1v1h-1zM532 360h1v1h-1zM485 418h1v1h-1zM504 417h1v1h-1zM538 398h1v1h-1zM504 407h1v1h-1zM521 339h1v1h-1zM546 407h1v1h-1zM500 342h1v1h-1zM545 382h1v1h-1zM506 379h1v1h-1zM508 352h1v1h-1z"/>
<path fill="#4c4c4c" d="M549 409h1v1h-1zM521 418h1v1h-1zM487 346h1v1h-1zM492 377h1v1h-1zM486 338h1v1h-1zM504 405h1v1h-1zM523 390h1v1h-1zM531 355h1v1h-1zM518 362h1v1h-1zM500 339h1v1h-1zM575 347h1v1h-1zM495 362h1v1h-1zM519 382h1v1h-1zM544 336h1v1h-1zM476 334h1v1h-1zM500 374h1v1h-1zM535 416h1v1h-1zM512 410h1v1h-1z"/>
<path fill="#383838" d="M465 411h1v1h-1zM419 397h1v1h-1zM464 383h1v1h-1zM351 415h1v1h-1zM357 358h1v1h-1zM377 405h1v1h-1zM384 354h1v1h-1zM365 400h1v1h-1zM435 408h1v1h-1zM456 403h1v1h-1zM446 387h1v1h-1zM414 391h1v1h-1z"/>
<polyline points="58.0,425.8 60.1,425.8 62.2,425.6 66.1,425.2 69.3,424.9 72.1,424.5 73.8,424.0 74.5,423.2 75.3,422.2 76.0,421.5 76.8,421.2" fill="none" stroke="#fff" stroke-width="2" stroke-dasharray="3 1" shape-rendering="crispEdges"/>
<polyline points="78.1,420.1 78.6,420.7 79.1,421.5 79.8,422.5 80.8,423.2 83.4,423.5 90.4,423.7 98.2,423.7 100.3,423.8" fill="none" stroke="#fff" stroke-width="2" stroke-dasharray="3 1" shape-rendering="crispEdges"/>
<polyline points="86.9,407.6 87.9,406.8 89.2,405.7 90.4,404.7 92.1,403.7 95.0,403.0 99.2,402.6 103.2,402.5 106.3,403.0 109.6,403.7 113.3,404.2 117.2,404.6 122.2,404.6 126.4,404.5 129.2,403.8 137.0,403.6 139.8,403.4 143.7,403.2 144.4,402.9 148.6,402.1 153.2,401.7" fill="none" stroke="#fff" stroke-width="2.6" stroke-dasharray="3 1" shape-rendering="crispEdges"/>
<polyline points="103.5,401.5 105.2,401.0 108.0,400.5 110.8,400.3 113.7,400.4 117.4,401.1 121.8,402.1 126.4,403.0 129.2,403.2" fill="none" stroke="#fff" stroke-width="1.6" stroke-dasharray="2 1" shape-rendering="crispEdges"/>
<polyline points="148.6,401.1 153.2,399.6 156.0,398.6 159.0,397.4 160.9,396.2 163.1,394.5 164.5,392.9 165.9,391.1 166.9,389.5 167.7,388.1 168.3,387.0 168.6,386.7 169.0,385.1 169.6,382.7 170.3,379.6" fill="none" stroke="#fff" stroke-width="1.6" stroke-dasharray="2 1.2" shape-rendering="crispEdges"/>
<polyline points="153.2,401.7 156.0,401.3 159.0,400.6 161.6,399.9 164.8,398.7 166.9,397.7 168.9,396.6 170.8,395.4 172.9,393.8 174.3,392.5 175.6,391.2 176.4,390.1 177.0,388.8 177.5,387.8 178.0,386.6 178.4,385.3 178.7,384.3 179.0,380.8" fill="none" stroke="#fff" stroke-width="1.6" stroke-dasharray="2 1.2" shape-rendering="crispEdges"/>
<polyline points="360.0,425.8 362.1,425.8 364.2,425.6 368.1,425.2 371.3,424.9 374.1,424.5 375.8,424.0 376.5,423.2 377.3,422.2 378.0,421.5 378.8,421.2" fill="none" stroke="#fff" stroke-width="2" stroke-dasharray="3 1" shape-rendering="crispEdges"/>
<polyline points="380.1,420.1 380.6,420.7 381.1,421.5 381.8,422.5 382.8,423.2 385.4,423.5 392.4,423.7 400.2,423.7 402.3,423.8" fill="none" stroke="#fff" stroke-width="2" stroke-dasharray="3 1" shape-rendering="crispEdges"/>
<polyline points="388.9,407.6 389.9,406.8 391.2,405.7 392.4,404.7 394.1,403.7 397.0,403.0 401.2,402.6 405.2,402.5 408.3,403.0 411.6,403.7 415.3,404.2 419.2,404.6 424.1,404.6 428.4,404.5 431.2,403.8 439.0,403.6 441.8,403.4 445.7,403.2 446.4,402.9 450.6,402.1 455.2,401.7" fill="none" stroke="#fff" stroke-width="2.6" stroke-dasharray="3 1" shape-rendering="crispEdges"/>
<polyline points="405.5,401.5 407.2,401.0 410.0,400.5 412.8,400.3 415.7,400.4 419.4,401.1 423.8,402.1 428.4,403.0 431.2,403.2" fill="none" stroke="#fff" stroke-width="1.6" stroke-dasharray="2 1" shape-rendering="crispEdges"/>
<polyline points="450.6,401.1 455.2,399.6 458.0,398.6 461.0,397.4 462.9,396.2 465.1,394.5 466.5,392.9 467.9,391.1 468.9,389.5 469.7,388.1 470.3,387.0 470.6,386.7 471.0,385.1 471.6,382.7 472.3,379.6" fill="none" stroke="#fff" stroke-width="1.6" stroke-dasharray="2 1.2" shape-rendering="crispEdges"/>
<polyline points="455.2,401.7 458.0,401.3 461.0,400.6 463.6,399.9 466.8,398.7 468.9,397.7 470.9,396.6 472.8,395.4 474.9,393.8 476.3,392.5 477.6,391.2 478.4,390.1 479.0,388.8 479.5,387.8 480.0,386.6 480.4,385.3 480.7,384.3 481.0,380.8" fill="none" stroke="#fff" stroke-width="1.6" stroke-dasharray="2 1.2" shape-rendering="crispEdges"/>
<polyline points="677.1,424.5 678.8,424.0 679.5,423.2 680.3,422.2 681.0,421.5 681.8,421.2" fill="none" stroke="#fff" stroke-width="1.2" stroke-dasharray="2 1" shape-rendering="crispEdges"/>
<polyline points="693.1,407.2 695.5,405.3 698.4,404 705.2,402.4 711,401.3 717.2,400.5" fill="none" stroke="#fff" stroke-width="1.3" stroke-dasharray="2 1.2" shape-rendering="crispEdges"/>
<polyline points="753.6,402.1 758.2,401.7" fill="none" stroke="#fff" stroke-width="1.4" stroke-dasharray="2 1" shape-rendering="crispEdges"/>
<polyline points="753.6,401.1 758.2,399.6 761.0,398.6 764.0,397.4 765.9,396.2 768.1,394.5 769.5,392.9 770.9,391.1 771.9,389.5 772.7,388.1 773.3,387.0 773.6,386.7 774.0,385.1 774.6,382.7 775.3,379.6" fill="none" stroke="#fff" stroke-width="1.6" stroke-dasharray="2 1" shape-rendering="crispEdges"/>
<polyline points="758.2,401.7 761.0,401.3 764.0,400.6 766.6,399.9 769.8,398.7 771.9,397.7 773.9,396.6 775.8,395.4 777.9,393.8 779.3,392.5 780.6,391.2 781.4,390.1 782.0,388.8 782.5,387.8 783.0,386.6 783.4,385.3 783.7,384.3 784.0,380.8 784.3,377.2 784.4,373.5" fill="none" stroke="#fff" stroke-width="1.6" stroke-dasharray="2 1" shape-rendering="crispEdges"/>
<rect x="843" y="352" width="1" height="2" fill="#555"/>
<rect x="852" y="362" width="1" height="1" fill="#6a6a6a"/>
<rect x="857" y="347" width="1" height="1" fill="#404040"/>
<rect x="843" y="378" width="1" height="1" fill="#6a6a6a"/>
<rect x="847" y="363" width="1" height="1" fill="#404040"/>
<rect x="834" y="363" width="1" height="2" fill="#555"/>
<rect x="841" y="339" width="1" height="2" fill="#404040"/>
<rect x="830" y="349" width="1" height="1" fill="#555"/>
<rect x="829" y="373" width="1" height="2" fill="#555"/>
<rect x="844" y="353" width="1" height="2" fill="#555"/>
<rect x="846" y="351" width="1" height="1" fill="#404040"/>
<rect x="841" y="357" width="1" height="1" fill="#6a6a6a"/>
<rect x="832" y="349" width="1" height="2" fill="#555"/>
<rect x="846" y="360" width="1" height="2" fill="#6a6a6a"/>
<rect x="837" y="350" width="1" height="1" fill="#555"/>
<rect x="845" y="378" width="1" height="2" fill="#6a6a6a"/>
<rect x="850" y="377" width="1" height="2" fill="#6a6a6a"/>
<rect x="856" y="340" width="1" height="2" fill="#404040"/>
<rect x="826" y="347" width="1" height="1" fill="#404040"/>
<rect x="824" y="356" width="1" height="2" fill="#555"/>
<rect x="854" y="353" width="1" height="1" fill="#404040"/>
<rect x="850" y="348" width="1" height="1" fill="#404040"/>
<rect x="853" y="338" width="1" height="2" fill="#6a6a6a"/>
<rect x="845" y="350" width="1" height="1" fill="#6a6a6a"/>
<rect x="842" y="336" width="1" height="1" fill="#6a6a6a"/>
<rect x="844" y="358" width="1" height="1" fill="#555"/>
<rect x="840" y="365" width="1" height="1" fill="#555"/>
<rect x="848" y="351" width="1" height="1" fill="#555"/>
<rect x="830" y="352" width="1" height="2" fill="#6a6a6a"/>
<rect x="853" y="359" width="1" height="2" fill="#6a6a6a"/>
<rect x="840" y="366" width="1" height="1" fill="#555"/>
<rect x="853" y="377" width="1" height="2" fill="#555"/>
<rect x="841" y="353" width="1" height="2" fill="#555"/>
<rect x="842" y="337" width="1" height="2" fill="#6a6a6a"/>
<rect x="840" y="362" width="1" height="1" fill="#555"/>
<rect x="840" y="365" width="1" height="1" fill="#6a6a6a"/>
<rect x="839" y="337" width="1" height="1" fill="#6a6a6a"/>
<rect x="829" y="337" width="1" height="1" fill="#555"/>
<rect x="841" y="404" width="1" height="1" fill="#4a4a4a"/>
<rect x="840" y="401" width="1" height="1" fill="#4a4a4a"/>
<rect x="819" y="419" width="1" height="1" fill="#4a4a4a"/>
<rect x="852" y="403" width="1" height="1" fill="#4a4a4a"/>
<rect x="849" y="398" width="1" height="1" fill="#4a4a4a"/>
<rect x="851" y="425" width="1" height="1" fill="#4a4a4a"/>
<rect x="844" y="399" width="1" height="1" fill="#4a4a4a"/>
<rect x="835" y="415" width="1" height="1" fill="#4a4a4a"/>
<rect x="823" y="405" width="1" height="1" fill="#4a4a4a"/>
<rect x="844" y="415" width="1" height="1" fill="#4a4a4a"/>
<rect x="815" y="414" width="1" height="1" fill="#4a4a4a"/>
<rect x="857" y="416" width="1" height="1" fill="#4a4a4a"/>
<rect x="821" y="420" width="1" height="1" fill="#4a4a4a"/>
<rect x="858" y="397" width="1" height="1" fill="#4a4a4a"/>
<rect x="654" y="340" width="1" height="1" fill="#555"/><rect x="656" y="339" width="1" height="1" fill="#444"/>
</g>
<text x="104" y="444" fill="#8c8c8c" stroke="#8c8c8c" stroke-width="0.08" font-size="12" textLength="114.5" lengthAdjust="spacingAndGlyphs">original ionogram resized</text>
<text x="398.5" y="444" fill="#8c8c8c" stroke="#8c8c8c" stroke-width="0.08" font-size="12" textLength="129.5" lengthAdjust="spacingAndGlyphs">eliminate multiple reflections</text>
<text x="723" y="444" fill="#8c8c8c" stroke="#8c8c8c" stroke-width="0.08" font-size="12" textLength="85" lengthAdjust="spacingAndGlyphs">evidence F2 trace</text>
<g shape-rendering="crispEdges">
<path d="M35 467h680v266h-680zM36 468v264h678v-264z" fill="#ffff00" fill-rule="evenodd"/>
<rect x="37" y="467" width="1" height="265" fill="#6e6e6e"/>
<rect x="77" y="467" width="1" height="265" fill="#6e6e6e"/>
<rect x="116" y="467" width="1" height="265" fill="#6e6e6e"/>
<rect x="156" y="467" width="1" height="265" fill="#6e6e6e"/>
<rect x="196" y="467" width="1" height="265" fill="#6e6e6e"/>
<rect x="236" y="467" width="1" height="265" fill="#6e6e6e"/>
<rect x="275" y="467" width="1" height="265" fill="#6e6e6e"/>
<rect x="315" y="467" width="1" height="265" fill="#6e6e6e"/>
<rect x="355" y="467" width="1" height="265" fill="#6e6e6e"/>
<rect x="395" y="467" width="1" height="265" fill="#6e6e6e"/>
<rect x="434" y="467" width="1" height="265" fill="#6e6e6e"/>
<rect x="474" y="467" width="1" height="265" fill="#6e6e6e"/>
<rect x="514" y="467" width="1" height="265" fill="#6e6e6e"/>
<rect x="554" y="467" width="1" height="265" fill="#6e6e6e"/>
<rect x="593" y="467" width="1" height="265" fill="#6e6e6e"/>
<rect x="633" y="467" width="1" height="265" fill="#6e6e6e"/>
<rect x="673" y="467" width="1" height="265" fill="#6e6e6e"/>
<rect x="713" y="467" width="1" height="265" fill="#2a2a3a"/>
<rect x="37" y="729" width="677" height="1" fill="#6e6e6e"/>
<rect x="37" y="690" width="677" height="1" fill="#6e6e6e"/>
<rect x="37" y="651" width="677" height="1" fill="#6e6e6e"/>
<rect x="37" y="611" width="677" height="1" fill="#6e6e6e"/>
<rect x="37" y="572" width="677" height="1" fill="#6e6e6e"/>
<rect x="37" y="533" width="677" height="1" fill="#6e6e6e"/>
<rect x="37" y="494" width="677" height="1" fill="#6e6e6e"/>
<rect x="37" y="469" width="677" height="1" fill="#6e6e6e"/>
<path fill="#8c8c8c" d="M62 480h2v2h-2zM93 476h2v2h-2zM42 487h2v2h-2zM46 489h2v1h-2zM123 482h2v1h-2zM123 485h2v4h-2zM46 494h2v2h-2zM81 494h2v2h-2zM36 497h2v2h-2zM66 501h2v2h-2zM66 511h2v4h-2zM70 524h2v2h-2zM56 526h2v1h-2zM85 534h2v2h-2zM85 548h2v2h-2zM231 548h2v2h-2zM199 557h2v2h-2zM193 561h2v2h-2zM201 561h2v2h-2zM203 563h2v1h-2zM54 575h2v2h-2zM58 578h2v2h-2zM48 580h2v2h-2zM83 580h2v2h-2zM68 601h2v2h-2zM78 603h2v2h-2zM72 615h2v2h-2zM227 640h2v2h-2zM211 647h2v2h-2zM70 679h2v2h-2zM70 691h2v2h-2zM89 700h2v2h-2zM80 702h2v1h-2zM80 710h2v3h-2zM83 710h2v2h-2zM80 719h2v2h-2zM199 705h2v2h-2zM119 721h2v2h-2zM131 721h2v2h-2zM52 730h2v2h-2zM83 728h2v2h-2zM61 725h3v1h-3zM302 531h2v2h-2zM409 531h2v2h-2zM270 569h2v2h-2zM421 566h2v2h-2zM425 475h2v4h-2zM434 487h2v2h-2zM415 578h2v6h-2zM421 577h2v1h-2zM421 584h2v2h-2zM431 582h2v2h-2zM388 590h2v2h-2zM402 595h2v2h-2zM411 599h2v2h-2zM431 605h2v2h-2zM413 638h2v4h-2zM413 654h2v2h-2zM425 728h2v2h-2zM447 469h2v2h-2zM457 469h2v2h-2zM509 470h2v5h-2zM436 487h2v2h-2zM493 482h2v3h-2zM511 482h3v1h-3zM519 482h2v3h-2zM519 489h2v1h-2zM535 482h2v1h-2zM551 489h2v15h-2zM555 494h2v2h-2zM555 501h2v2h-2zM555 515h2v2h-2zM582 478h2v2h-2zM578 483h2v4h-2zM576 487h2v2h-2zM578 490h2v2h-2zM594 487h2v2h-2zM586 491h2v9h-2zM570 497h2v2h-2zM576 503h2v3h-2zM570 506h2v6h-2zM622 497h2v2h-2zM620 506h2v2h-2zM616 511h2v11h-2zM616 524h2v2h-2zM620 527h2v4h-2zM632 515h2v2h-2zM588 518h2v2h-2zM584 520h2v4h-2zM580 524h2v3h-2zM580 529h2v2h-2zM584 529h2v4h-2zM602 518h2v2h-2zM602 527h2v2h-2zM602 534h2v4h-2zM513 497h2v2h-2zM519 496h2v3h-2zM529 499h2v2h-2zM517 511h2v6h-2zM517 520h2v2h-2zM517 525h2v2h-2zM517 529h2v2h-2zM527 520h2v2h-2zM527 529h2v2h-2zM533 513h2v2h-2zM543 511h2v2h-2zM543 520h2v2h-2zM439 511h2v2h-2zM465 510h2v2h-2zM449 520h2v2h-2zM465 524h2v3h-2zM449 536h2v2h-2zM443 540h2v1h-2zM459 548h2v2h-2zM469 555h2v2h-2zM501 550h2v2h-2zM495 575h2v2h-2zM527 541h2v2h-2zM527 547h2v2h-2zM531 552h2v2h-2zM543 557h2v2h-2zM531 561h2v2h-2zM531 564h2v2h-2zM563 538h2v2h-2zM568 538h2v2h-2zM572 540h2v1h-2zM563 541h2v6h-2zM568 543h2v2h-2zM559 548h2v9h-2zM568 550h2v4h-2zM584 543h2v2h-2zM566 561h2v6h-2zM566 568h2v3h-2zM586 568h2v2h-2zM592 557h2v2h-2zM592 570h2v3h-2zM614 561h2v5h-2zM618 568h2v2h-2zM561 573h2v5h-2zM566 575h2v2h-2zM570 578h2v2h-2zM563 584h2v5h-2zM576 585h2v2h-2zM572 589h2v2h-2zM618 580h2v2h-2zM624 578h2v6h-2zM618 587h2v2h-2zM624 587h2v2h-2zM634 580h2v2h-2zM598 589h2v2h-2zM447 590h2v2h-2zM541 590h2v2h-2zM473 592h2v2h-2zM561 592h2v2h-2zM563 595h2v2h-2zM572 591h2v9h-2zM618 592h2v2h-2zM618 598h2v3h-2zM503 601h2v2h-2zM588 601h2v2h-2zM588 607h2v1h-2zM588 610h2v2h-2zM606 607h2v1h-2zM618 610h2v2h-2zM457 607h2v2h-2zM535 607h2v2h-2zM596 612h2v2h-2zM606 612h2v3h-2zM606 617h2v2h-2zM608 622h2v2h-2zM606 624h2v2h-2zM515 617h2v2h-2zM535 622h2v2h-2zM539 626h2v2h-2zM529 628h2v2h-2zM529 636h2v2h-2zM533 636h2v2h-2zM539 635h2v2h-2zM539 644h2v1h-2zM600 631h2v2h-2zM612 636h2v4h-2zM612 644h2v1h-2zM565 636h1v2h-1zM555 642h2v2h-2zM574 645h2v6h-2zM592 644h2v3h-2zM604 647h2v2h-2zM600 649h2v2h-2zM455 642h2v2h-2zM461 640h2v2h-2zM481 644h2v3h-2zM455 656h2v2h-2zM455 661h2v2h-2zM491 661h2v2h-2zM509 656h2v2h-2zM507 665h2v2h-2zM501 668h2v2h-2zM485 673h2v4h-2zM495 686h2v2h-2zM523 656h2v2h-2zM529 656h2v2h-2zM523 661h2v4h-2zM543 670h2v2h-2zM533 682h2v2h-2zM543 682h2v2h-2zM574 661h2v2h-2zM574 665h2v3h-2zM565 679h1v2h-1zM578 680h2v2h-2zM584 680h2v2h-2zM568 688h2v1h-2zM600 661h2v2h-2zM626 656h2v2h-2zM626 661h2v2h-2zM600 679h2v2h-2zM602 686h2v2h-2zM604 690h2v3h-2zM626 691h2v2h-2zM453 693h2v3h-2zM485 691h2v2h-2zM495 700h2v5h-2zM499 703h2v4h-2zM515 695h2v3h-2zM515 702h2v1h-2zM515 709h2v2h-2zM533 702h2v1h-2zM525 710h2v2h-2zM507 714h2v2h-2zM509 717h2v2h-2zM495 716h2v3h-2zM499 719h2v6h-2zM531 721h2v2h-2zM541 719h2v4h-2zM541 725h2v2h-2zM473 723h2v2h-2zM473 727h2v2h-2zM453 725h2v1h-2zM483 728h2v2h-2zM493 730h2v2h-2zM525 729h2v3h-2zM535 726h2v5h-2zM576 693h2v2h-2zM586 688h2v1h-2zM586 691h2v4h-2zM586 696h2v2h-2zM584 700h2v2h-2zM588 709h2v2h-2zM582 712h2v4h-2zM588 714h2v2h-2zM580 719h2v2h-2zM580 723h2v3h-2zM582 717h2v2h-2zM570 730h2v2h-2zM604 702h2v1h-2zM600 709h2v2h-2zM604 709h2v2h-2zM598 714h2v2h-2zM604 714h2v2h-2zM604 719h2v2h-2zM624 710h2v2h-2zM630 698h2v4h-2zM630 705h2v2h-2zM628 729h2v3h-2zM638 474h2v3h-2zM642 485h2v2h-2zM642 492h2v2h-2zM642 497h2v2h-2zM640 508h2v2h-2zM640 513h2v2h-2zM642 517h2v7h-2zM642 526h2v1h-2zM652 515h2v2h-2zM660 469h2v2h-2zM692 468h2v3h-2zM690 480h2v2h-2zM706 471h2v7h-2zM706 480h2v2h-2zM690 497h2v2h-2zM694 499h2v4h-2zM694 504h2v2h-2zM694 511h2v2h-2zM694 527h2v4h-2zM694 534h2v2h-2zM710 496h2v1h-2zM710 506h2v2h-2zM710 510h2v2h-2zM710 513h2v4h-2zM710 518h2v2h-2zM710 524h2v2h-2zM710 527h2v2h-2zM712 541h2v2h-2zM702 545h2v4h-2zM688 554h2v2h-2zM646 536h2v2h-2zM646 550h2v2h-2zM646 561h2v2h-2zM644 570h2v1h-2zM692 570h2v1h-2zM702 575h2v2h-2zM702 578h2v2h-2zM712 578h2v2h-2zM712 582h2v2h-2zM702 590h2v2h-2zM634 580h2v2h-2zM616 524h2v2h-2zM620 528h2v2h-2zM618 587h2v2h-2zM624 587h2v2h-2zM654 603h2v2h-2zM644 608h2v2h-2zM654 610h2v2h-2zM664 622h2v2h-2zM686 603h2v2h-2zM692 601h2v2h-2zM702 599h2v2h-2zM702 592h2v2h-2zM702 610h2v2h-2zM698 615h2v2h-2zM712 612h2v2h-2zM684 644h2v1h-2zM636 652h2v2h-2zM636 670h2v2h-2zM668 656h2v2h-2zM656 673h2v2h-2zM698 665h2v2h-2zM698 673h2v2h-2zM700 675h2v2h-2zM700 682h2v2h-2zM656 705h2v4h-2zM676 712h2v2h-2zM692 719h2v2h-2zM712 730h2v2h-2z"/>
<path fill="#fff" d="M549 467h4v3h-4zM553 484h2v3h-2zM519 503h2v3h-2zM519 509h2v3h-2zM582 728h2v4h-2zM590 726h2v5h-2zM638 478h2v11h-2z"/>
<path fill="#a0a0a0" d="M549 473h5v5h-5z"/>
<path fill="#b0b0b0" d="M590 715h2v10h-2z"/>
<path fill="#909090" d="M382 614h2v3h-2zM388 591h2v2h-2zM121 706h2v4h-2zM125 706h2v3h-2zM189 718h5v2h-5zM192 716h2v2h-2zM157 713h4v2h-4zM162 714h3v2h-3zM167 715h2v2h-2zM409 609h2v3h-2zM410 600h2v2h-2z"/>
<polygon points="68.0,723.6 74.0,723.3 80.0,722.6 91.0,721.3 100.0,720.5 108.0,719.5 112.8,718.0 115.0,715.5 117.0,713.0 119.0,711.5 121.5,711.0 121.5,713.5 119.0,715.0 117.0,717.0 115.0,720.0 112.8,722.0 108.0,723.0 100.0,724.0 91.0,725.0 80.0,726.2 74.0,726.2 68.0,726.0" fill="#fff"/>
<polygon points="125.0,708.0 126.5,709.0 128.0,711.0 130.0,713.5 132.6,715.5 140.0,716.5 160.0,717.0 182.0,717.5 188.0,718.0 188.0,721.0 182.0,721.0 160.0,721.0 140.0,720.5 132.6,720.0 130.0,718.0 128.0,715.5 126.5,713.0 125.0,711.0" fill="#fff"/>
<polygon points="150.0,674.0 153.0,671.0 156.5,668.0 160.0,665.5 164.8,663.0 173.0,661.0 185.0,660.0 196.2,659.8 205.0,661.0 214.4,663.0 225.0,664.5 236.0,665.6 250.0,665.5 262.0,665.0 270.0,661.5 292.0,661.6 300.0,661.6 311.0,661.4 313.0,660.2 325.0,657.5 338.0,656.8 338.0,662.0 325.0,663.5 313.0,665.2 311.0,665.6 300.0,666.8 292.0,667.5 270.0,668.8 262.0,669.3 250.0,669.5 236.0,669.3 225.0,668.0 214.4,667.0 205.0,665.0 196.2,663.5 185.0,664.0 173.0,665.0 164.8,667.0 160.0,670.0 156.5,672.5 153.0,675.5 150.0,677.0" fill="#fff"/>
<polygon points="197.0,658.0 202.0,656.3 210.0,655.0 217.7,654.4 226.0,654.4 236.6,656.0 248.9,658.8 262.0,660.5 270.0,661.3 270.0,666.0 262.0,665.5 248.9,662.5 236.6,659.6 226.0,657.6 217.7,657.2 210.0,657.5 202.0,658.8 197.0,660.0" fill="#fff"/>
<polygon points="325.0,655.5 338.0,651.9 346.0,649.3 354.4,646.0 360.0,642.5 366.0,637.8 370.0,633.5 374.2,628.5 377.0,624.0 379.2,620.0 381.0,617.5 381.8,617.5 381.8,620.0 381.0,622.0 379.2,625.5 377.0,629.0 374.2,633.0 370.0,637.8 366.0,642.0 360.0,646.8 354.4,649.8 346.0,653.0 338.0,655.8 325.0,660.0" fill="#fff"/>
<polygon points="338.0,657.2 346.0,656.2 354.4,654.6 362.0,652.7 370.9,649.6 377.0,647.0 382.5,644.0 388.0,640.6 394.0,636.0 398.0,632.3 401.5,628.4 403.8,625.5 405.6,622.0 407.0,619.0 408.3,616.0 409.5,612.5 410.4,610.5 410.4,614.0 409.5,617.5 408.3,621.0 407.0,624.5 405.6,627.0 403.8,630.5 401.5,633.7 398.0,636.6 394.0,640.0 388.0,644.2 382.5,647.5 377.0,650.6 370.9,653.0 362.0,656.3 354.4,658.3 346.0,660.8 338.0,662.0" fill="#fff"/>
<rect x="386" y="598" width="2" height="6" fill="#fff"/>
<rect x="411" y="604" width="2" height="4" fill="#fff"/>
<rect x="181" y="668" width="2" height="2" fill="#fff"/>
<rect x="182" y="666" width="2" height="2" fill="#fff"/>
<rect x="183" y="665" width="1" height="2" fill="#fff"/>
</g>
<polyline points="41.4,467.2 48.6,494.1 55.8,514.8 63.1,533.3 70.0,546.0 77.5,557.1 89.9,572.6 106.4,587.1 123.0,597.4 137.4,604.6 146.7,608.8 157.2,613.1" fill="none" stroke="#00ff00" stroke-width="1" shape-rendering="crispEdges"/>
<polyline points="157.2,613.1 175.8,619.7 196.4,626.5" fill="none" stroke="#00ff00" stroke-width="1" stroke-dasharray="2 1" shape-rendering="crispEdges"/>
<polyline points="196.4,626.5 223.3,633.3 244.0,637.9 268.8,642.0 295.6,647.1 314.8,650.7 336.3,655.2 356.1,658.0 369.3,661.3 379.3,664.3 382.2,666.8" fill="none" stroke="#00ff00" stroke-width="1" stroke-dasharray="1 2" shape-rendering="crispEdges"/>
<polyline points="73.2,727.4 90.8,726.5 97.0,726.3 107.3,724.8 113.5,724.0 119.7,723.2 124.4,722.2 124.7,720.6 121.8,719.1 118.5,717.9 118.2,715.5 120.7,712.9 128.0,710.3 134.7,708.2 145.7,705.2 162.2,700.9 178.8,696.4 188.7,692.3 196.4,688.5 235.7,685.4 285.3,682.3 314.8,680.5 339.6,678.7 356.1,676.7 369.3,673.9 379.3,670.6 382.2,666.8" fill="none" stroke="#00ff00" stroke-width="1" shape-rendering="crispEdges"/>
<path d="M36 727.5h3M37.5 726v3M38 727.5h3M39.5 726v3M40 727.5h3M41.5 726v3M42 727.5h3M43.5 726v3M44 727.5h3M45.5 726v3M46 727.5h3M47.5 726v3M48 727.5h3M49.5 726v3M50 727.5h3M51.5 726v3M52 727.5h3M53.5 726v3M54 727.5h3M55.5 726v3M56 727.5h3M57.5 726v3M58 727.5h3M59.5 726v3M61 727.5h3M62.5 726v3M63 727.5h3M64.5 726v3M65 727.5h3M66.5 726v3M67 727.5h3M68.5 726v3M69 727.5h3M70.5 726v3M71 727.5h3M72.5 726v3M73 727.5h3M74.5 726v3M75 726.5h3M76.5 725v3M77 725.5h3M78.5 724v3M79 725.5h3M80.5 724v3M82 725.5h3M83.5 724v3M84 725.5h3M85.5 724v3M86 725.5h3M87.5 724v3M88 725.5h3M89.5 724v3M90 725.5h3M91.5 724v3M92 725.5h3M93.5 724v3M94 724.5h3M95.5 723v3M96 723.5h3M97.5 722v3M98 722.5h3M99.5 721v3M100 722.5h3M101.5 721v3M102 722.5h3M103.5 721v3M104 722.5h3M105.5 721v3M106 722.5h3M107.5 721v3M108 722.5h3M109.5 721v3M110 722.5h3M111.5 721v3M113 720.5h3M114.5 719v3M115 718.5h3M116.5 717v3M117 716.5h3M118.5 715v3M119 714.5h3M120.5 713v3M121 711.5h3M122.5 710v3M123 708.5h3M124.5 707v3M125 697.5h3M126.5 696v3M127 648.5h3M128.5 647v3M129 660.5h3M130.5 659v3M131 666.5h3M132.5 665v3M133 671.5h3M134.5 670v3M135 673.5h3M136.5 672v3M138 675.5h3M139.5 674v3M140 677.5h3M141.5 676v3M142 677.5h3M143.5 676v3M144 677.5h3M145.5 676v3M146 677.5h3M147.5 676v3M148 677.5h3M149.5 676v3M150 677.5h3M151.5 676v3M153 676.5h3M154.5 675v3M155 675.5h3M156.5 674v3M157 675.5h3M158.5 674v3M159 674.5h3M160.5 673v3M161 673.5h3M162.5 672v3M163 672.5h3M164.5 671v3M165 672.5h3M166.5 671v3M168 671.5h3M169.5 670v3M170 670.5h3M171.5 669v3M172 669.5h3M173.5 668v3M174 668.5h3M175.5 667v3M176 668.5h3M177.5 667v3M178 666.5h3M179.5 665v3M180 665.5h3M181.5 664v3M181 664.5h3M182.5 663v3M183 662.5h3M184.5 661v3M186 658.5h3M187.5 657v3M187 654.5h3M188.5 653v3M189 649.5h3M190.5 648v3M191 641.5h3M192.5 640v3M193 624.5h3M194.5 623v3M195 633.5h3M196.5 632v3M197 637.5h3M198.5 636v3M200 640.5h3M201.5 639v3M201 646.5h3M202.5 645v3M203 651.5h3M204.5 650v3M206 657.5h3M207.5 656v3M208 660.5h3M209.5 659v3M210 662.5h3M211.5 661v3M212 664.5h3M213.5 663v3M214 666.5h3M215.5 665v3M216 667.5h3M217.5 666v3M218 668.5h3M219.5 667v3M220 668.5h3M221.5 667v3M222 669.5h3M223.5 668v3M224 669.5h3M225.5 668v3M226 669.5h3M227.5 668v3M228 670.5h3M229.5 669v3M231 670.5h3M232.5 669v3M233 670.5h3M234.5 669v3M235 670.5h3M236.5 669v3M238 670.5h3M239.5 669v3M240 670.5h3M241.5 669v3M242 670.5h3M243.5 669v3M244 670.5h3M245.5 669v3M246 670.5h3M247.5 669v3M248 670.5h3M249.5 669v3M250 670.5h3M251.5 669v3M252 670.5h3M253.5 669v3M254 670.5h3M255.5 669v3M256 670.5h3M257.5 669v3M258 670.5h3M259.5 669v3M260 670.5h3M261.5 669v3M262 670.5h3M263.5 669v3M264 670.5h3M265.5 669v3M266 670.5h3M267.5 669v3M268 670.5h3M269.5 669v3M270 670.5h3M271.5 669v3M272 670.5h3M273.5 669v3M274 670.5h3M275.5 669v3M276 669.5h3M277.5 668v3M278 669.5h3M279.5 668v3M280 669.5h3M281.5 668v3M282 669.5h3M283.5 668v3M284 669.5h3M285.5 668v3M286 668.5h3M287.5 667v3M288 668.5h3M289.5 667v3M291 667.5h3M292.5 666v3M293 667.5h3M294.5 666v3M295 667.5h3M296.5 666v3M297 666.5h3M298.5 665v3M299 666.5h3M300.5 665v3M301 665.5h3M302.5 664v3M303 665.5h3M304.5 664v3M305 665.5h3M306.5 664v3M307 665.5h3M308.5 664v3M309 664.5h3M310.5 663v3M311 664.5h3M312.5 663v3M313 664.5h3M314.5 663v3M315 664.5h3M316.5 663v3M317 664.5h3M318.5 663v3M320 663.5h3M321.5 662v3M322 662.5h3M323.5 661v3M324 662.5h3M325.5 661v3M326 661.5h3M327.5 660v3M328 661.5h3M329.5 660v3M330 660.5h3M331.5 659v3M332 660.5h3M333.5 659v3M333 659.5h3M334.5 658v3M335 659.5h3M336.5 658v3M337 658.5h3M338.5 657v3M339 657.5h3M340.5 656v3M341 657.5h3M342.5 656v3M342 656.5h3M343.5 655v3M344 655.5h3M345.5 654v3M346 655.5h3M347.5 654v3M348 653.5h3M349.5 652v3M350 652.5h3M351.5 651v3M352 652.5h3M353.5 651v3M354 652.5h3M355.5 651v3M356 651.5h3M357.5 650v3M358 650.5h3M359.5 649v3M360 649.5h3M361.5 648v3M362 647.5h3M363.5 646v3M364 645.5h3M365.5 644v3M366 643.5h3M367.5 642v3M368 640.5h3M369.5 639v3M370 638.5h3M371.5 637v3M372 635.5h3M373.5 634v3M375 632.5h3M376.5 631v3M377 627.5h3M378.5 626v3M379 621.5h3M380.5 620v3M381 611.5h3M382.5 610v3M383 590.5h3M384.5 589v3" stroke="#0000ff" stroke-width="1" fill="none" shape-rendering="crispEdges"/>
<text x="31.5" y="475" fill="#ffff80" stroke="#ffff80" stroke-width="0.2" font-size="12" font-weight="bold" text-anchor="end">760</text>
<text x="5.8" y="487.3" fill="#ffff80" stroke="#ffff80" stroke-width="0.2" font-size="12" font-weight="bold" textLength="15.6" lengthAdjust="spacingAndGlyphs">km</text>
<text x="31.5" y="500" fill="#ffff80" stroke="#ffff80" stroke-width="0.2" font-size="12" font-weight="bold" text-anchor="end">700</text>
<text x="31.5" y="539" fill="#ffff80" stroke="#ffff80" stroke-width="0.2" font-size="12" font-weight="bold" text-anchor="end">600</text>
<text x="31.5" y="578" fill="#ffff80" stroke="#ffff80" stroke-width="0.2" font-size="12" font-weight="bold" text-anchor="end">500</text>
<text x="31.5" y="616" fill="#ffff80" stroke="#ffff80" stroke-width="0.2" font-size="12" font-weight="bold" text-anchor="end">400</text>
<text x="31.5" y="657" fill="#ffff80" stroke="#ffff80" stroke-width="0.2" font-size="12" font-weight="bold" text-anchor="end">300</text>
<text x="31.5" y="696" fill="#ffff80" stroke="#ffff80" stroke-width="0.2" font-size="12" font-weight="bold" text-anchor="end">200</text>
<text x="31.5" y="734" fill="#ffff80" stroke="#ffff80" stroke-width="0.2" font-size="12" font-weight="bold" text-anchor="end">100</text>
<text x="37.6" y="748" fill="#ffff80" stroke="#ffff80" stroke-width="0.2" font-size="12" font-weight="bold" text-anchor="middle">1</text>
<text x="77.6" y="748" fill="#ffff80" stroke="#ffff80" stroke-width="0.2" font-size="12" font-weight="bold" text-anchor="middle">2</text>
<text x="116.6" y="748" fill="#ffff80" stroke="#ffff80" stroke-width="0.2" font-size="12" font-weight="bold" text-anchor="middle">3</text>
<text x="156.6" y="748" fill="#ffff80" stroke="#ffff80" stroke-width="0.2" font-size="12" font-weight="bold" text-anchor="middle">4</text>
<text x="196.6" y="748" fill="#ffff80" stroke="#ffff80" stroke-width="0.2" font-size="12" font-weight="bold" text-anchor="middle">5</text>
<text x="236.6" y="748" fill="#ffff80" stroke="#ffff80" stroke-width="0.2" font-size="12" font-weight="bold" text-anchor="middle">6</text>
<text x="275.6" y="748" fill="#ffff80" stroke="#ffff80" stroke-width="0.2" font-size="12" font-weight="bold" text-anchor="middle">7</text>
<text x="315.6" y="748" fill="#ffff80" stroke="#ffff80" stroke-width="0.2" font-size="12" font-weight="bold" text-anchor="middle">8</text>
<text x="355.6" y="748" fill="#ffff80" stroke="#ffff80" stroke-width="0.2" font-size="12" font-weight="bold" text-anchor="middle">9</text>
<text x="396.5" y="748" fill="#ffff80" stroke="#ffff80" stroke-width="0.2" font-size="12" font-weight="bold" text-anchor="middle">10</text>
<text x="435.5" y="748" fill="#ffff80" stroke="#ffff80" stroke-width="0.2" font-size="12" font-weight="bold" text-anchor="middle">11</text>
<text x="475.5" y="748" fill="#ffff80" stroke="#ffff80" stroke-width="0.2" font-size="12" font-weight="bold" text-anchor="middle">12</text>
<text x="515.5" y="748" fill="#ffff80" stroke="#ffff80" stroke-width="0.2" font-size="12" font-weight="bold" text-anchor="middle">13</text>
<text x="555.5" y="748" fill="#ffff80" stroke="#ffff80" stroke-width="0.2" font-size="12" font-weight="bold" text-anchor="middle">14</text>
<text x="594.5" y="748" fill="#ffff80" stroke="#ffff80" stroke-width="0.2" font-size="12" font-weight="bold" text-anchor="middle">15</text>
<text x="634.5" y="748" fill="#ffff80" stroke="#ffff80" stroke-width="0.2" font-size="12" font-weight="bold" text-anchor="middle">16</text>
<text x="674.5" y="748" fill="#ffff80" stroke="#ffff80" stroke-width="0.2" font-size="12" font-weight="bold" text-anchor="middle">17</text>
<text x="714.5" y="748" fill="#ffff80" stroke="#ffff80" stroke-width="0.2" font-size="12" font-weight="bold" text-anchor="middle">18</text>
<text x="684" y="752" fill="#ffff80" stroke="#ffff80" stroke-width="0.2" font-size="12" font-weight="bold" textLength="24" lengthAdjust="spacingAndGlyphs">MHz</text>
<g shape-rendering="crispEdges">
<rect x="727" y="468" width="165" height="1" fill="#66ee77"/>
<rect x="727" y="494" width="165" height="1" fill="#66ee77"/>
<rect x="727" y="679" width="165" height="1" fill="#66ee77"/>
<rect x="727" y="468" width="1" height="212" fill="#66ee77"/>
<rect x="891" y="468" width="1" height="212" fill="#66ee77"/>
</g>
<text x="784" y="488" fill="#ffff80" stroke="#ffff80" stroke-width="0.2" font-size="12" textLength="50.5" lengthAdjust="spacingAndGlyphs">AIP output</text>
<text x="732.6" y="514" fill="#ffff80" stroke="#ffff80" stroke-width="0.2" font-size="12" textLength="25.5" lengthAdjust="spacingAndGlyphs">hmF2</text>
<text x="785.5" y="514" fill="#ffff80" stroke="#ffff80" stroke-width="0.2" font-size="12" textLength="17.3" lengthAdjust="spacingAndGlyphs">247</text>
<text x="832.5" y="514" fill="#ffff80" stroke="#ffff80" stroke-width="0.2" font-size="12" textLength="14" lengthAdjust="spacingAndGlyphs">km</text>
<text x="732.6" y="527" fill="#ffff80" stroke="#ffff80" stroke-width="0.2" font-size="12" textLength="20.8" lengthAdjust="spacingAndGlyphs">foF2</text>
<text x="791.6" y="527" fill="#ffff80" stroke="#ffff80" stroke-width="0.2" font-size="12" textLength="20.5" lengthAdjust="spacingAndGlyphs">09.7</text>
<text x="832.5" y="527" fill="#ffff80" stroke="#ffff80" stroke-width="0.2" font-size="12" textLength="21.8" lengthAdjust="spacingAndGlyphs">MHz</text>
<text x="732.6" y="540" fill="#ffff80" stroke="#ffff80" stroke-width="0.2" font-size="12" textLength="19.3" lengthAdjust="spacingAndGlyphs">foF1</text>
<text x="791.6" y="540" fill="#ffff80" stroke="#ffff80" stroke-width="0.2" font-size="12" textLength="20.5" lengthAdjust="spacingAndGlyphs">05.0</text>
<text x="832.5" y="540" fill="#ffff80" stroke="#ffff80" stroke-width="0.2" font-size="12" textLength="21.8" lengthAdjust="spacingAndGlyphs">MHz</text>
<text x="865.6" y="540" fill="#ffff80" stroke="#ffff80" stroke-width="0.2" font-size="12" textLength="19.5" lengthAdjust="spacingAndGlyphs">[PY]</text>
<text x="732.6" y="553" fill="#ffff80" stroke="#ffff80" stroke-width="0.2" font-size="12" textLength="24" lengthAdjust="spacingAndGlyphs">hmF1</text>
<text x="786" y="553" fill="#ffff80" stroke="#ffff80" stroke-width="0.2" font-size="12" textLength="17.1" lengthAdjust="spacingAndGlyphs">193</text>
<text x="832.5" y="553" fill="#ffff80" stroke="#ffff80" stroke-width="0.2" font-size="12" textLength="14" lengthAdjust="spacingAndGlyphs">km</text>
<text x="732.6" y="566" fill="#ffff80" stroke="#ffff80" stroke-width="0.2" font-size="12" textLength="11.5" lengthAdjust="spacingAndGlyphs">D1</text>
<text x="791.6" y="566" fill="#ffff80" stroke="#ffff80" stroke-width="0.2" font-size="12" textLength="20.5" lengthAdjust="spacingAndGlyphs">01.0</text>
<text x="732.6" y="579" fill="#ffff80" stroke="#ffff80" stroke-width="0.2" font-size="12" textLength="14.9" lengthAdjust="spacingAndGlyphs">foE</text>
<text x="798" y="579" fill="#ffff80" stroke="#ffff80" stroke-width="0.2" font-size="12" textLength="14" lengthAdjust="spacingAndGlyphs">3.3</text>
<text x="832.5" y="579" fill="#ffff80" stroke="#ffff80" stroke-width="0.2" font-size="12" textLength="21.8" lengthAdjust="spacingAndGlyphs">MHz</text>
<text x="732.6" y="592" fill="#ffff80" stroke="#ffff80" stroke-width="0.2" font-size="12" textLength="19.3" lengthAdjust="spacingAndGlyphs">hmE</text>
<text x="786" y="592" fill="#ffff80" stroke="#ffff80" stroke-width="0.2" font-size="12" textLength="17.1" lengthAdjust="spacingAndGlyphs">110</text>
<text x="832.5" y="592" fill="#ffff80" stroke="#ffff80" stroke-width="0.2" font-size="12" textLength="14" lengthAdjust="spacingAndGlyphs">km</text>
<text x="732.6" y="605" fill="#ffff80" stroke="#ffff80" stroke-width="0.2" font-size="12" textLength="18" lengthAdjust="spacingAndGlyphs">ymE</text>
<text x="792.1" y="605" fill="#ffff80" stroke="#ffff80" stroke-width="0.2" font-size="12" textLength="10.6" lengthAdjust="spacingAndGlyphs">20</text>
<text x="832.5" y="605" fill="#ffff80" stroke="#ffff80" stroke-width="0.2" font-size="12" textLength="14" lengthAdjust="spacingAndGlyphs">km</text>
<text x="732.6" y="618" fill="#ffff80" stroke="#ffff80" stroke-width="0.2" font-size="12" textLength="23" lengthAdjust="spacingAndGlyphs">h_vE</text>
<text x="786" y="618" fill="#ffff80" stroke="#ffff80" stroke-width="0.2" font-size="12" textLength="17.1" lengthAdjust="spacingAndGlyphs">119</text>
<text x="832.5" y="618" fill="#ffff80" stroke="#ffff80" stroke-width="0.2" font-size="12" textLength="14" lengthAdjust="spacingAndGlyphs">km</text>
<text x="732.6" y="631" fill="#ffff80" stroke="#ffff80" stroke-width="0.2" font-size="12" textLength="31.6" lengthAdjust="spacingAndGlyphs">Ewidth</text>
<text x="792.1" y="631" fill="#ffff80" stroke="#ffff80" stroke-width="0.2" font-size="12" textLength="10.6" lengthAdjust="spacingAndGlyphs">24</text>
<text x="832.5" y="631" fill="#ffff80" stroke="#ffff80" stroke-width="0.2" font-size="12" textLength="14" lengthAdjust="spacingAndGlyphs">km</text>
<text x="732.6" y="644" fill="#ffff80" stroke="#ffff80" stroke-width="0.2" font-size="12" textLength="41.3" lengthAdjust="spacingAndGlyphs">DelN_vE</text>
<text x="791.6" y="644" fill="#ffff80" stroke="#ffff80" stroke-width="0.2" font-size="12" textLength="19.5" lengthAdjust="spacingAndGlyphs">00.1</text>
<text x="832.5" y="644" fill="#ffff80" stroke="#ffff80" stroke-width="0.2" font-size="12" textLength="29.2" lengthAdjust="spacingAndGlyphs">m^(-3)</text>
<text x="732.6" y="657" fill="#ffff80" stroke="#ffff80" stroke-width="0.2" font-size="12" textLength="12.1" lengthAdjust="spacingAndGlyphs">B0</text>
<text x="785.5" y="657" fill="#ffff80" stroke="#ffff80" stroke-width="0.2" font-size="12" textLength="26.6" lengthAdjust="spacingAndGlyphs">056.0</text>
<text x="832.5" y="657" fill="#ffff80" stroke="#ffff80" stroke-width="0.2" font-size="12" textLength="14" lengthAdjust="spacingAndGlyphs">km</text>
<text x="732.6" y="670" fill="#ffff80" stroke="#ffff80" stroke-width="0.2" font-size="12" textLength="11.2" lengthAdjust="spacingAndGlyphs">B1</text>
<text x="791.6" y="670" fill="#ffff80" stroke="#ffff80" stroke-width="0.2" font-size="12" textLength="20.5" lengthAdjust="spacingAndGlyphs">02.8</text>
<text x="733.4" y="683" fill="#ffff80" stroke="#ffff80" stroke-width="0.2" font-size="12" textLength="42" lengthAdjust="spacingAndGlyphs">TEC[Bot]</text>
<text x="785.5" y="683" fill="#ffff80" stroke="#ffff80" stroke-width="0.2" font-size="12" textLength="26.6" lengthAdjust="spacingAndGlyphs">006.5</text>
<text x="833.8" y="683" fill="#ffff80" stroke="#ffff80" stroke-width="0.2" font-size="12" textLength="26" lengthAdjust="spacingAndGlyphs">TECU</text>
<text x="733.4" y="696" fill="#ffff80" stroke="#ffff80" stroke-width="0.2" font-size="12" textLength="44.6" lengthAdjust="spacingAndGlyphs">TEC[Top]</text>
<text x="785.5" y="696" fill="#ffff80" stroke="#ffff80" stroke-width="0.2" font-size="12" textLength="26" lengthAdjust="spacingAndGlyphs">011.7</text>
<text x="833.8" y="696" fill="#ffff80" stroke="#ffff80" stroke-width="0.2" font-size="12" textLength="26" lengthAdjust="spacingAndGlyphs">TECU</text>
</svg>
</body></html>
